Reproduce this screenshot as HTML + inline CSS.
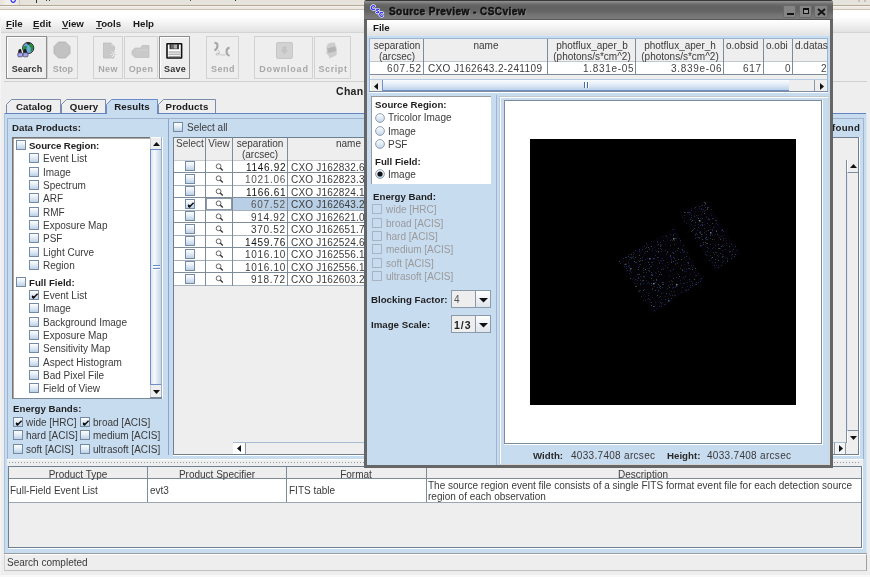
<!DOCTYPE html>
<html><head><meta charset="utf-8"><style>
html,body{margin:0;padding:0;width:870px;height:577px;overflow:hidden;background:#f2f2f2;}
body{position:relative;font-family:"Liberation Sans",sans-serif;}
div,span,svg{position:absolute;}
.t{white-space:nowrap;line-height:1;will-change:transform;}
</style></head><body>
<div style="left:0px;top:0px;width:870px;height:10px;background:#e6e2dc"></div>
<div style="left:0px;top:5px;width:870px;height:1px;background:#b4a894"></div>
<div style="left:0px;top:6px;width:870px;height:1px;background:#f4f2ee"></div>
<div style="left:0px;top:7px;width:870px;height:2px;background:#ebe8e2"></div>
<div style="left:0px;top:9px;width:870px;height:1px;background:#cdc2b0"></div>
<div style="left:0px;top:0px;width:19px;height:5px;background:linear-gradient(90deg,#e8e4dc,#f2f0ea 40%,#ebe7df)"></div>
<div style="left:19px;top:0px;width:1px;height:5px;background:#cfc8bb"></div>
<svg style="left:10px;top:-3px" width="7" height="7"><ellipse cx="3.2" cy="2.8" rx="2.2" ry="2.6" fill="none" stroke="#3030f0" stroke-width="1.2"/></svg>
<div style="left:36px;top:0px;width:1px;height:3px;background:#333"></div>
<div style="left:46px;top:0px;width:1px;height:1px;background:#444"></div>
<div style="left:49px;top:0px;width:1px;height:1px;background:#444"></div>
<div style="left:189.5px;top:0px;width:1.2px;height:1px;background:#555"></div>
<div style="left:234.5px;top:0px;width:1.5px;height:1px;background:#333"></div>
<div style="left:858px;top:0px;width:2px;height:2px;background:#bdb8b0;border-radius:1px"></div>
<div style="left:864px;top:0px;width:2px;height:2px;background:#bdb8b0;border-radius:1px"></div>
<div style="left:0px;top:10px;width:870px;height:565px;background:#eeeeee"></div>
<div style="left:0px;top:575px;width:870px;height:2px;background:#f8f8f8"></div>
<div style="left:0px;top:10px;width:870px;height:22px;background:linear-gradient(#ffffff 0%,#ffffff 30%,#e2e2e2 100%)"></div>
<div style="left:0px;top:17px;width:1px;height:557px;background:#f4f4f4"></div>
<div style="left:1px;top:32px;width:869px;height:1px;background:#d4d4d4"></div>
<span class="t" style="left:6.4px;top:19px;font-size:9.7px;font-weight:bold;color:#1a1a1a;">File</span>
<span class="t" style="left:33.3px;top:19px;font-size:9.7px;font-weight:bold;color:#1a1a1a;">Edit</span>
<span class="t" style="left:62px;top:19px;font-size:9.7px;font-weight:bold;color:#1a1a1a;">View</span>
<span class="t" style="left:96.2px;top:19px;font-size:9.7px;font-weight:bold;color:#1a1a1a;">Tools</span>
<span class="t" style="left:132.6px;top:19px;font-size:9.7px;font-weight:bold;color:#1a1a1a;">Help</span>
<div style="left:6.4px;top:28px;width:6px;height:1px;background:#333"></div>
<div style="left:33.3px;top:28px;width:6px;height:1px;background:#333"></div>
<div style="left:62px;top:28px;width:6px;height:1px;background:#333"></div>
<div style="left:96.2px;top:28px;width:6px;height:1px;background:#333"></div>
<div style="left:6px;top:36px;width:41px;height:43px;box-sizing:border-box;border:1px solid #8e8e8e;box-shadow:inset 1px 1px 0 #ffffff;"></div>
<span class="t" style="left:-173.5px;width:400px;text-align:center;top:65px;font-size:9px;font-weight:bold;color:#333;letter-spacing:0.1px">Search</span>
<svg style="left:16px;top:40px" width="20" height="19" viewBox="0 0 20 19">
<circle cx="12.2" cy="8" r="5.6" fill="#6fa8dc" stroke="#1a1a1a" stroke-width="0.9"/>
<path d="M12 3 Q16.5 3.5 17.5 7 Q17 10 15 12.5 Q14 10 15 8 Q13 6 12 3Z" fill="#1f8f35"/>
<path d="M7 9 Q8 5 11 6 Q11 9 9 12 Q7.5 11 7 9Z" fill="#1f8f35"/>
<path d="M10 2.6 Q12.5 2.2 15 3.5 Q13 4 12 5Z" fill="#2a2a2a"/>
<path d="M2.5 10 Q3.5 8.5 5 9 L6 13 H2Z" fill="#1e1e1e"/>
<path d="M7.5 10 Q8.5 8.5 10 9 L11.5 13 H7Z" fill="#1e1e1e"/>
<rect x="1.8" y="12.8" width="4.8" height="4" rx="1" fill="#a4a4ec" stroke="#3a3a5a" stroke-width="0.7"/>
<rect x="7.2" y="12.8" width="4.8" height="4" rx="1" fill="#a4a4ec" stroke="#3a3a5a" stroke-width="0.7"/>
</svg>
<div style="left:47px;top:36px;width:31px;height:43px;box-sizing:border-box;border:1px solid #d2d2d2;"></div>
<span class="t" style="left:-137.5px;width:400px;text-align:center;top:65px;font-size:9px;font-weight:bold;color:#a8a8a8;letter-spacing:0.1px">Stop</span>
<svg style="left:53px;top:41px" width="18" height="18" viewBox="0 0 18 18">
<polygon points="5.5,1 12.5,1 17,5.5 17,12.5 12.5,17 5.5,17 1,12.5 1,5.5" fill="#c2c2c2" stroke="#b0b0b0" stroke-width="0.8"/></svg>
<div style="left:93px;top:36px;width:30px;height:43px;box-sizing:border-box;border:1px solid #d2d2d2;"></div>
<span class="t" style="left:-92.0px;width:400px;text-align:center;top:65px;font-size:9px;font-weight:bold;color:#a8a8a8;letter-spacing:0.3px">New</span>
<svg style="left:102px;top:42px" width="18" height="18" viewBox="0 0 18 18">
<path d="M1.5 1 H9 L12.5 4.5 V16 H1.5Z" fill="#c9c9c9" stroke="#bcbcbc" stroke-width="0.8"/>
<path d="M9 1 V4.5 H12.5" fill="#dedede" stroke="#bcbcbc" stroke-width="0.6"/>
<g stroke="#f4f4f4" stroke-width="0.9"><line x1="12.5" y1="8.5" x2="12.5" y2="16.5"/><line x1="8.5" y1="12.5" x2="16.5" y2="12.5"/><line x1="9.7" y1="9.7" x2="15.3" y2="15.3"/><line x1="15.3" y1="9.7" x2="9.7" y2="15.3"/></g>
<g stroke="#c4c4c4" stroke-width="0.5"><line x1="12.5" y1="9.5" x2="12.5" y2="15.5"/><line x1="9.5" y1="12.5" x2="15.5" y2="12.5"/></g>
</svg>
<div style="left:124px;top:36px;width:34px;height:43px;box-sizing:border-box;border:1px solid #d2d2d2;"></div>
<span class="t" style="left:-59.0px;width:400px;text-align:center;top:65px;font-size:9px;font-weight:bold;color:#a8a8a8;letter-spacing:0.4px">Open</span>
<svg style="left:131px;top:44px" width="20" height="15" viewBox="0 0 20 15">
<path d="M1 7 L4 4 H10 L11 1.5 H18 V13.5 H4 L1 10.5Z" fill="#c9c9c9" stroke="#bdbdbd" stroke-width="0.7"/>
<path d="M5 6 H17" stroke="#d6d6d6" stroke-width="0.8"/></svg>
<div style="left:159px;top:36px;width:31px;height:43px;box-sizing:border-box;border:1px solid #8e8e8e;box-shadow:inset 1px 1px 0 #ffffff;"></div>
<span class="t" style="left:-25.5px;width:400px;text-align:center;top:65px;font-size:9px;font-weight:bold;color:#333;letter-spacing:0.3px">Save</span>
<svg style="left:166px;top:43px" width="17" height="16" viewBox="0 0 17 16">
<rect x="1" y="0.8" width="14.6" height="14.2" rx="0.3" fill="#ffffff" stroke="#111" stroke-width="1.6"/>
<rect x="3.5" y="1" width="9.5" height="5.2" fill="#3a3a3a"/><rect x="7.5" y="1.6" width="3.5" height="4" fill="#b0b0b0"/><rect x="5" y="1.6" width="2.5" height="4" fill="#6a6a6a"/>
<g stroke="#777" stroke-width="0.8"><line x1="2.5" y1="9" x2="14.2" y2="9"/><line x1="2.5" y1="11.2" x2="14.2" y2="11.2"/><line x1="2.5" y1="13.4" x2="14.2" y2="13.4"/></g>
</svg>
<div style="left:206px;top:36px;width:33px;height:43px;box-sizing:border-box;border:1px solid #d2d2d2;"></div>
<span class="t" style="left:22.5px;width:400px;text-align:center;top:65px;font-size:9px;font-weight:bold;color:#a8a8a8;letter-spacing:0.5px">Send</span>
<svg style="left:210px;top:40px" width="26" height="20" viewBox="0 0 26 20">
<path d="M4.5 2.8 Q7.5 2.8 7.5 5.5 Q7.5 9 4.5 10.5" fill="none" stroke="#a6a6a6" stroke-width="2"/>
<path d="M8 10 Q10 11.5 9 14 Q7.5 16.5 6 14.5 Q6 12.5 9 13.5 Q10.5 15.5 12.5 15 L15.5 14.8" fill="none" stroke="#bdbdbd" stroke-width="0.9"/>
<path d="M19.5 7.5 Q16.5 8.5 16.5 11.5 Q16.5 14.5 19.5 15.8" fill="none" stroke="#a6a6a6" stroke-width="2"/>
</svg>
<div style="left:254px;top:36px;width:59px;height:43px;box-sizing:border-box;border:1px solid #d2d2d2;"></div>
<span class="t" style="left:83.5px;width:400px;text-align:center;top:65px;font-size:9px;font-weight:bold;color:#a8a8a8;letter-spacing:0.8px">Download</span>
<svg style="left:276px;top:42px" width="17" height="17" viewBox="0 0 17 17">
<rect x="0.5" y="0.5" width="16" height="16" rx="1.5" fill="#d2d2d2" stroke="#c6c6c6"/>
<path d="M6 4 H11 V8 H13.5 L8.5 12.8 L3.5 8 H6Z" fill="#c4c4c4" stroke="#d8d8d8" stroke-width="0.6"/></svg>
<div style="left:314px;top:36px;width:37px;height:43px;box-sizing:border-box;border:1px solid #d2d2d2;"></div>
<span class="t" style="left:132.5px;width:400px;text-align:center;top:65px;font-size:9px;font-weight:bold;color:#a8a8a8;letter-spacing:0.6px">Script</span>
<svg style="left:324px;top:41px" width="15" height="19" viewBox="0 0 15 19">
<path d="M3 5 Q3 1.5 9 1.5 Q12.5 1.5 11 3.5 Q13.5 7 12.5 10 Q14 14 10 15.5 L5 17.5 Q6 16 4 14 Q1 12 3 9 Q1.5 7 3 5Z" fill="#cdcdcd"/>
<path d="M3 7.5 L11 5.5 L12.5 10 L4.5 12Z" fill="#b3b3b3"/></svg>
<div style="left:4px;top:81px;width:863px;height:1px;background:#cfcfcf"></div>
<span class="t" style="left:336px;top:86px;font-size:10.5px;font-weight:bold;color:#222;letter-spacing:0.3px">Chandra Source Catalog</span>
<svg style="left:6px;top:99px" width="56" height="15" viewBox="0 0 56 15"><path d="M0.5 15 V5.5 L5.5 0.5 H54.5 V15" fill="#eeeeee" stroke="#7b8bab" stroke-width="1"/></svg>
<span class="t" style="left:-166.5px;width:400px;text-align:center;top:102px;font-size:9.7px;font-weight:bold;color:#1a1a1a;letter-spacing:0.1px">Catalog</span>
<svg style="left:61px;top:99px" width="46" height="15" viewBox="0 0 46 15"><path d="M0.5 15 V5.5 L5.5 0.5 H44.5 V15" fill="#eeeeee" stroke="#7b8bab" stroke-width="1"/></svg>
<span class="t" style="left:-116.5px;width:400px;text-align:center;top:102px;font-size:9.7px;font-weight:bold;color:#1a1a1a;letter-spacing:0.1px">Query</span>
<svg style="left:158px;top:99px" width="59" height="15" viewBox="0 0 59 15"><path d="M0.5 15 V5.5 L5.5 0.5 H57.5 V15" fill="#eeeeee" stroke="#7b8bab" stroke-width="1"/></svg>
<span class="t" style="left:-13.0px;width:400px;text-align:center;top:102px;font-size:9.7px;font-weight:bold;color:#1a1a1a;letter-spacing:0.1px">Products</span>
<div style="left:4px;top:113px;width:863px;height:440px;background:#c8dcf0"></div>
<div style="left:4px;top:113px;width:863px;height:1px;background:#6382bf"></div>
<div style="left:4px;top:113px;width:1px;height:440px;background:#a9c2e2"></div>
<div style="left:866px;top:113px;width:1px;height:440px;background:#d8e6f4"></div>
<svg style="left:106px;top:99px" width="53" height="15" viewBox="0 0 53 15"><path d="M0.5 15 V5.5 L5.5 0.5 H51.5 V15" fill="#c8dcf0" stroke="#6a8ac8" stroke-width="1"/></svg>
<span class="t" style="left:-68.0px;width:400px;text-align:center;top:102px;font-size:9.7px;font-weight:bold;color:#1a1a1a;letter-spacing:0.1px">Results</span>
<div style="left:7px;top:118px;width:857px;height:341px;box-sizing:border-box;border:1px solid #9fb3cc;border-bottom:none"></div>
<span class="t" style="left:11.8px;top:123px;font-size:9.7px;font-weight:bold;color:#1f1f1f;">Data Products:</span>
<div style="left:12px;top:137px;width:150px;height:262px;background:#fff;box-sizing:border-box;border-top:2px solid #767676;border-left:2px solid #767676;border-bottom:1px solid #7a8a9a"></div>
<div style="left:13px;top:139px;width:1px;height:259px;background:#a8a8a8"></div>
<div style="left:14px;top:138px;width:136px;height:1px;background:#a8a8a8"></div>
<div style="left:150px;top:137px;width:12px;height:261px;background:#eeeeee;box-sizing:border-box;border-right:1px solid #a0b0c0"></div>
<div style="left:162px;top:137px;width:1px;height:262px;background:#ffffff"></div>
<div style="left:150px;top:137px;width:11px;height:12px;background:#eeeeee;box-sizing:border-box;border-left:1px solid #c8d0d8;border-top:1px solid #ffffff"><svg style="left:2px;top:3.5px" width="7" height="4"><path d="M0 4 L3.5 0 L7 4Z" fill="#111"/></svg></div>
<div style="left:150px;top:149px;width:11px;height:236px;background:linear-gradient(90deg,#dbe6f3,#f6f9fc 35%,#c3d5e9);box-sizing:border-box;border-left:1px solid #6f8fc8;border-top:1px solid #6f8fc8;border-bottom:1px solid #6f8fc8"></div>
<div style="left:153px;top:265px;width:7px;height:1px;background:#6a88c4"></div>
<div style="left:153px;top:266px;width:7px;height:1px;background:#ffffff"></div>
<div style="left:153px;top:268px;width:7px;height:1px;background:#6a88c4"></div>
<div style="left:153px;top:269px;width:7px;height:1px;background:#ffffff"></div>
<div style="left:150px;top:385px;width:11px;height:13px;background:#eeeeee;box-sizing:border-box;border-left:1px solid #c8d0d8"><svg style="left:2px;top:5px" width="7" height="4"><path d="M0 0 L7 0 L3.5 4Z" fill="#111"/></svg></div>
<div style="left:150px;top:397px;width:12px;height:1px;background:#7a8a9a"></div>
<div style="left:16px;top:140px;width:10px;height:10px;box-sizing:border-box;border:1px solid #7489a3;background:linear-gradient(#fdfeff 0%,#e4edf6 45%,#bcd1e6 100%)"></div>
<span class="t" style="left:29.3px;top:141px;font-size:9.7px;font-weight:bold;color:#1f1f1f;letter-spacing:-0.1px">Source Region:</span>
<div style="left:29px;top:153px;width:10px;height:10px;box-sizing:border-box;border:1px solid #7489a3;background:linear-gradient(#fdfeff 0%,#e4edf6 45%,#bcd1e6 100%)"></div>
<span class="t" style="left:42.7px;top:154px;font-size:10px;font-weight:normal;color:#3a3a3a;">Event List</span>
<div style="left:29px;top:167px;width:10px;height:10px;box-sizing:border-box;border:1px solid #7489a3;background:linear-gradient(#fdfeff 0%,#e4edf6 45%,#bcd1e6 100%)"></div>
<span class="t" style="left:42.7px;top:168px;font-size:10px;font-weight:normal;color:#3a3a3a;">Image</span>
<div style="left:29px;top:180px;width:10px;height:10px;box-sizing:border-box;border:1px solid #7489a3;background:linear-gradient(#fdfeff 0%,#e4edf6 45%,#bcd1e6 100%)"></div>
<span class="t" style="left:42.7px;top:181px;font-size:10px;font-weight:normal;color:#3a3a3a;">Spectrum</span>
<div style="left:29px;top:193px;width:10px;height:10px;box-sizing:border-box;border:1px solid #7489a3;background:linear-gradient(#fdfeff 0%,#e4edf6 45%,#bcd1e6 100%)"></div>
<span class="t" style="left:42.7px;top:194px;font-size:10px;font-weight:normal;color:#3a3a3a;">ARF</span>
<div style="left:29px;top:207px;width:10px;height:10px;box-sizing:border-box;border:1px solid #7489a3;background:linear-gradient(#fdfeff 0%,#e4edf6 45%,#bcd1e6 100%)"></div>
<span class="t" style="left:42.7px;top:208px;font-size:10px;font-weight:normal;color:#3a3a3a;">RMF</span>
<div style="left:29px;top:220px;width:10px;height:10px;box-sizing:border-box;border:1px solid #7489a3;background:linear-gradient(#fdfeff 0%,#e4edf6 45%,#bcd1e6 100%)"></div>
<span class="t" style="left:42.7px;top:221px;font-size:10px;font-weight:normal;color:#3a3a3a;">Exposure Map</span>
<div style="left:29px;top:233px;width:10px;height:10px;box-sizing:border-box;border:1px solid #7489a3;background:linear-gradient(#fdfeff 0%,#e4edf6 45%,#bcd1e6 100%)"></div>
<span class="t" style="left:42.7px;top:234px;font-size:10px;font-weight:normal;color:#3a3a3a;">PSF</span>
<div style="left:29px;top:247px;width:10px;height:10px;box-sizing:border-box;border:1px solid #7489a3;background:linear-gradient(#fdfeff 0%,#e4edf6 45%,#bcd1e6 100%)"></div>
<span class="t" style="left:42.7px;top:248px;font-size:10px;font-weight:normal;color:#3a3a3a;">Light Curve</span>
<div style="left:29px;top:260px;width:10px;height:10px;box-sizing:border-box;border:1px solid #7489a3;background:linear-gradient(#fdfeff 0%,#e4edf6 45%,#bcd1e6 100%)"></div>
<span class="t" style="left:42.7px;top:261px;font-size:10px;font-weight:normal;color:#3a3a3a;">Region</span>
<div style="left:16px;top:277px;width:10px;height:10px;box-sizing:border-box;border:1px solid #7489a3;background:linear-gradient(#fdfeff 0%,#e4edf6 45%,#bcd1e6 100%)"></div>
<span class="t" style="left:29.3px;top:278px;font-size:9.7px;font-weight:bold;color:#1f1f1f;">Full Field:</span>
<div style="left:29px;top:290px;width:10px;height:10px;box-sizing:border-box;border:1px solid #7489a3;background:linear-gradient(#fdfeff 0%,#e4edf6 45%,#bcd1e6 100%)"><svg style="left:1px;top:1px" width="8" height="8" viewBox="0 0 8 8"><path d="M1.2 3.8 L2.6 5.8 L6.6 1.8" fill="none" stroke="#111" stroke-width="1.5"/><rect x="1" y="4" width="2.2" height="2.2" fill="#111"/></svg></div>
<span class="t" style="left:42.7px;top:291px;font-size:10px;font-weight:normal;color:#3a3a3a;">Event List</span>
<div style="left:29px;top:303px;width:10px;height:10px;box-sizing:border-box;border:1px solid #7489a3;background:linear-gradient(#fdfeff 0%,#e4edf6 45%,#bcd1e6 100%)"></div>
<span class="t" style="left:42.7px;top:304px;font-size:10px;font-weight:normal;color:#3a3a3a;">Image</span>
<div style="left:29px;top:317px;width:10px;height:10px;box-sizing:border-box;border:1px solid #7489a3;background:linear-gradient(#fdfeff 0%,#e4edf6 45%,#bcd1e6 100%)"></div>
<span class="t" style="left:42.7px;top:318px;font-size:10px;font-weight:normal;color:#3a3a3a;">Background Image</span>
<div style="left:29px;top:330px;width:10px;height:10px;box-sizing:border-box;border:1px solid #7489a3;background:linear-gradient(#fdfeff 0%,#e4edf6 45%,#bcd1e6 100%)"></div>
<span class="t" style="left:42.7px;top:331px;font-size:10px;font-weight:normal;color:#3a3a3a;">Exposure Map</span>
<div style="left:29px;top:343px;width:10px;height:10px;box-sizing:border-box;border:1px solid #7489a3;background:linear-gradient(#fdfeff 0%,#e4edf6 45%,#bcd1e6 100%)"></div>
<span class="t" style="left:42.7px;top:344px;font-size:10px;font-weight:normal;color:#3a3a3a;">Sensitivity Map</span>
<div style="left:29px;top:357px;width:10px;height:10px;box-sizing:border-box;border:1px solid #7489a3;background:linear-gradient(#fdfeff 0%,#e4edf6 45%,#bcd1e6 100%)"></div>
<span class="t" style="left:42.7px;top:358px;font-size:10px;font-weight:normal;color:#3a3a3a;">Aspect Histogram</span>
<div style="left:29px;top:370px;width:10px;height:10px;box-sizing:border-box;border:1px solid #7489a3;background:linear-gradient(#fdfeff 0%,#e4edf6 45%,#bcd1e6 100%)"></div>
<span class="t" style="left:42.7px;top:371px;font-size:10px;font-weight:normal;color:#3a3a3a;">Bad Pixel File</span>
<div style="left:29px;top:383px;width:10px;height:10px;box-sizing:border-box;border:1px solid #7489a3;background:linear-gradient(#fdfeff 0%,#e4edf6 45%,#bcd1e6 100%)"></div>
<span class="t" style="left:42.7px;top:384px;font-size:10px;font-weight:normal;color:#3a3a3a;">Field of View</span>
<span class="t" style="left:12.8px;top:404px;font-size:9.7px;font-weight:bold;color:#1f1f1f;">Energy Bands:</span>
<div style="left:13px;top:417px;width:10px;height:10px;box-sizing:border-box;border:1px solid #7489a3;background:linear-gradient(#fdfeff 0%,#e4edf6 45%,#bcd1e6 100%)"><svg style="left:1px;top:1px" width="8" height="8" viewBox="0 0 8 8"><path d="M1.2 3.8 L2.6 5.8 L6.6 1.8" fill="none" stroke="#111" stroke-width="1.5"/><rect x="1" y="4" width="2.2" height="2.2" fill="#111"/></svg></div>
<span class="t" style="left:26px;top:418px;font-size:10px;font-weight:normal;color:#3a3a3a;">wide [HRC]</span>
<div style="left:80px;top:417px;width:10px;height:10px;box-sizing:border-box;border:1px solid #7489a3;background:linear-gradient(#fdfeff 0%,#e4edf6 45%,#bcd1e6 100%)"><svg style="left:1px;top:1px" width="8" height="8" viewBox="0 0 8 8"><path d="M1.2 3.8 L2.6 5.8 L6.6 1.8" fill="none" stroke="#111" stroke-width="1.5"/><rect x="1" y="4" width="2.2" height="2.2" fill="#111"/></svg></div>
<span class="t" style="left:92.8px;top:418px;font-size:10px;font-weight:normal;color:#3a3a3a;">broad [ACIS]</span>
<div style="left:13px;top:430px;width:10px;height:10px;box-sizing:border-box;border:1px solid #7489a3;background:linear-gradient(#fdfeff 0%,#e4edf6 45%,#bcd1e6 100%)"></div>
<span class="t" style="left:26px;top:431px;font-size:10px;font-weight:normal;color:#3a3a3a;">hard [ACIS]</span>
<div style="left:80px;top:430px;width:10px;height:10px;box-sizing:border-box;border:1px solid #7489a3;background:linear-gradient(#fdfeff 0%,#e4edf6 45%,#bcd1e6 100%)"></div>
<span class="t" style="left:92.8px;top:431px;font-size:10px;font-weight:normal;color:#3a3a3a;">medium [ACIS]</span>
<div style="left:13px;top:444px;width:10px;height:10px;box-sizing:border-box;border:1px solid #7489a3;background:linear-gradient(#fdfeff 0%,#e4edf6 45%,#bcd1e6 100%)"></div>
<span class="t" style="left:26px;top:445px;font-size:10px;font-weight:normal;color:#3a3a3a;">soft [ACIS]</span>
<div style="left:80px;top:444px;width:10px;height:10px;box-sizing:border-box;border:1px solid #7489a3;background:linear-gradient(#fdfeff 0%,#e4edf6 45%,#bcd1e6 100%)"></div>
<span class="t" style="left:92.8px;top:445px;font-size:10px;font-weight:normal;color:#3a3a3a;">ultrasoft [ACIS]</span>
<div style="left:168px;top:119px;width:1px;height:336px;background:#8aa4cc"></div>
<div style="left:173px;top:122px;width:10px;height:10px;box-sizing:border-box;border:1px solid #7489a3;background:linear-gradient(#fdfeff 0%,#e4edf6 45%,#bcd1e6 100%)"></div>
<span class="t" style="left:186.5px;top:123px;font-size:10px;font-weight:normal;color:#3a3a3a;">Select all</span>
<span class="t" style="right:10px;top:123px;font-size:9.7px;font-weight:bold;color:#1f1f1f;letter-spacing:0.25px">found</span>
<div style="left:173px;top:137px;width:686px;height:318px;background:#eeeeee;box-sizing:border-box;border:1px solid #6e7f92;border-bottom:1px solid #6e7f92"></div>
<div style="left:173px;top:455px;width:686px;height:1px;background:#ffffff"></div>
<div style="left:174px;top:138px;width:684px;height:23px;background:#eeeeee"></div>
<div style="left:174px;top:160px;width:657px;height:1px;background:#c8ccd0"></div>
<div style="left:205px;top:138px;width:1px;height:148px;background:#7e8c9a"></div>
<div style="left:232px;top:138px;width:1px;height:148px;background:#7e8c9a"></div>
<div style="left:287px;top:138px;width:1px;height:148px;background:#7e8c9a"></div>
<div style="left:500px;top:138px;width:1px;height:148px;background:#7e8c9a"></div>
<span class="t" style="left:-10.5px;width:400px;text-align:center;top:139px;font-size:10px;font-weight:normal;color:#444;">Select</span>
<span class="t" style="left:19px;width:400px;text-align:center;top:139px;font-size:10px;font-weight:normal;color:#444;">View</span>
<span class="t" style="left:60px;width:400px;text-align:center;top:139px;font-size:10px;font-weight:normal;color:#3a3a3a;">separation</span>
<span class="t" style="left:60px;width:400px;text-align:center;top:150px;font-size:10px;font-weight:normal;color:#3a3a3a;">(arcsec)</span>
<span class="t" style="right:509px;top:139px;font-size:10px;font-weight:normal;color:#3a3a3a;">name</span>
<div style="left:174px;top:161px;width:657px;height:11px;background:#fff"></div>
<div style="left:185px;top:161px;width:10px;height:10px;box-sizing:border-box;border:1px solid #7489a3;background:linear-gradient(#fdfeff 0%,#e4edf6 45%,#bcd1e6 100%)"></div>
<svg style="left:215px;top:163px" width="9" height="9" viewBox="0 0 9 9"><circle cx="3.6" cy="3.3" r="2.4" fill="none" stroke="#555" stroke-width="0.9"/><line x1="5.3" y1="5" x2="7.8" y2="7.5" stroke="#333" stroke-width="1.3"/></svg>
<span class="t" style="right:584px;top:163px;font-size:10px;font-weight:normal;color:#111;letter-spacing:0.68px">1146.92</span>
<span class="t" style="left:290.5px;top:163px;font-size:10px;font-weight:normal;color:#3a3a3a;letter-spacing:0.2px">CXO J162832.6</span>
<div style="left:174px;top:172px;width:657px;height:1px;background:#7e8c9a"></div>
<div style="left:174px;top:173px;width:657px;height:12px;background:#fff"></div>
<div style="left:185px;top:174px;width:10px;height:10px;box-sizing:border-box;border:1px solid #7489a3;background:linear-gradient(#fdfeff 0%,#e4edf6 45%,#bcd1e6 100%)"></div>
<svg style="left:215px;top:175px" width="9" height="9" viewBox="0 0 9 9"><circle cx="3.6" cy="3.3" r="2.4" fill="none" stroke="#555" stroke-width="0.9"/><line x1="5.3" y1="5" x2="7.8" y2="7.5" stroke="#333" stroke-width="1.3"/></svg>
<span class="t" style="right:584px;top:175px;font-size:10px;font-weight:normal;color:#555;letter-spacing:0.68px">1021.06</span>
<span class="t" style="left:290.5px;top:175px;font-size:10px;font-weight:normal;color:#3a3a3a;letter-spacing:0.2px">CXO J162823.3</span>
<div style="left:174px;top:185px;width:657px;height:1px;background:#a4b0bc"></div>
<div style="left:174px;top:186px;width:657px;height:11px;background:#fff"></div>
<div style="left:185px;top:186px;width:10px;height:10px;box-sizing:border-box;border:1px solid #7489a3;background:linear-gradient(#fdfeff 0%,#e4edf6 45%,#bcd1e6 100%)"></div>
<svg style="left:215px;top:188px" width="9" height="9" viewBox="0 0 9 9"><circle cx="3.6" cy="3.3" r="2.4" fill="none" stroke="#555" stroke-width="0.9"/><line x1="5.3" y1="5" x2="7.8" y2="7.5" stroke="#333" stroke-width="1.3"/></svg>
<span class="t" style="right:584px;top:188px;font-size:10px;font-weight:normal;color:#111;letter-spacing:0.68px">1166.61</span>
<span class="t" style="left:290.5px;top:188px;font-size:10px;font-weight:normal;color:#3a3a3a;letter-spacing:0.2px">CXO J162824.1</span>
<div style="left:174px;top:197px;width:657px;height:1px;background:#7e8c9a"></div>
<div style="left:233px;top:198px;width:598px;height:12px;background:#b8cfe6"></div>
<div style="left:174px;top:198px;width:31px;height:12px;background:#fff"></div>
<div style="left:206px;top:198px;width:26px;height:12px;box-sizing:border-box;border:1px solid #8a98a8;background:#fff"></div>
<div style="left:185px;top:199px;width:10px;height:10px;box-sizing:border-box;border:1px solid #7489a3;background:linear-gradient(#fdfeff 0%,#e4edf6 45%,#bcd1e6 100%)"><svg style="left:1px;top:1px" width="8" height="8" viewBox="0 0 8 8"><path d="M1.2 3.8 L2.6 5.8 L6.6 1.8" fill="none" stroke="#111" stroke-width="1.5"/><rect x="1" y="4" width="2.2" height="2.2" fill="#111"/></svg></div>
<svg style="left:215px;top:200px" width="9" height="9" viewBox="0 0 9 9"><circle cx="3.6" cy="3.3" r="2.4" fill="none" stroke="#555" stroke-width="0.9"/><line x1="5.3" y1="5" x2="7.8" y2="7.5" stroke="#333" stroke-width="1.3"/></svg>
<span class="t" style="right:584px;top:200px;font-size:10px;font-weight:normal;color:#555;letter-spacing:0.68px">607.52</span>
<span class="t" style="left:290.5px;top:200px;font-size:10px;font-weight:normal;color:#3a3a3a;letter-spacing:0.2px">CXO J162643.2</span>
<div style="left:174px;top:210px;width:657px;height:1px;background:#a4b0bc"></div>
<div style="left:174px;top:211px;width:657px;height:11px;background:#fff"></div>
<div style="left:185px;top:211px;width:10px;height:10px;box-sizing:border-box;border:1px solid #7489a3;background:linear-gradient(#fdfeff 0%,#e4edf6 45%,#bcd1e6 100%)"></div>
<svg style="left:215px;top:213px" width="9" height="9" viewBox="0 0 9 9"><circle cx="3.6" cy="3.3" r="2.4" fill="none" stroke="#555" stroke-width="0.9"/><line x1="5.3" y1="5" x2="7.8" y2="7.5" stroke="#333" stroke-width="1.3"/></svg>
<span class="t" style="right:584px;top:213px;font-size:10px;font-weight:normal;color:#3a3a3a;letter-spacing:0.68px">914.92</span>
<span class="t" style="left:290.5px;top:213px;font-size:10px;font-weight:normal;color:#3a3a3a;letter-spacing:0.2px">CXO J162621.0</span>
<div style="left:174px;top:222px;width:657px;height:1px;background:#7e8c9a"></div>
<div style="left:174px;top:223px;width:657px;height:12px;background:#fff"></div>
<div style="left:185px;top:224px;width:10px;height:10px;box-sizing:border-box;border:1px solid #7489a3;background:linear-gradient(#fdfeff 0%,#e4edf6 45%,#bcd1e6 100%)"></div>
<svg style="left:215px;top:225px" width="9" height="9" viewBox="0 0 9 9"><circle cx="3.6" cy="3.3" r="2.4" fill="none" stroke="#555" stroke-width="0.9"/><line x1="5.3" y1="5" x2="7.8" y2="7.5" stroke="#333" stroke-width="1.3"/></svg>
<span class="t" style="right:584px;top:225px;font-size:10px;font-weight:normal;color:#3a3a3a;letter-spacing:0.68px">370.52</span>
<span class="t" style="left:290.5px;top:225px;font-size:10px;font-weight:normal;color:#3a3a3a;letter-spacing:0.2px">CXO J162651.7</span>
<div style="left:174px;top:235px;width:657px;height:1px;background:#a4b0bc"></div>
<div style="left:174px;top:236px;width:657px;height:11px;background:#fff"></div>
<div style="left:185px;top:236px;width:10px;height:10px;box-sizing:border-box;border:1px solid #7489a3;background:linear-gradient(#fdfeff 0%,#e4edf6 45%,#bcd1e6 100%)"></div>
<svg style="left:215px;top:238px" width="9" height="9" viewBox="0 0 9 9"><circle cx="3.6" cy="3.3" r="2.4" fill="none" stroke="#555" stroke-width="0.9"/><line x1="5.3" y1="5" x2="7.8" y2="7.5" stroke="#333" stroke-width="1.3"/></svg>
<span class="t" style="right:584px;top:238px;font-size:10px;font-weight:normal;color:#111;letter-spacing:0.68px">1459.76</span>
<span class="t" style="left:290.5px;top:238px;font-size:10px;font-weight:normal;color:#3a3a3a;letter-spacing:0.2px">CXO J162524.6</span>
<div style="left:174px;top:247px;width:657px;height:1px;background:#7e8c9a"></div>
<div style="left:174px;top:248px;width:657px;height:12px;background:#fff"></div>
<div style="left:185px;top:249px;width:10px;height:10px;box-sizing:border-box;border:1px solid #7489a3;background:linear-gradient(#fdfeff 0%,#e4edf6 45%,#bcd1e6 100%)"></div>
<svg style="left:215px;top:250px" width="9" height="9" viewBox="0 0 9 9"><circle cx="3.6" cy="3.3" r="2.4" fill="none" stroke="#555" stroke-width="0.9"/><line x1="5.3" y1="5" x2="7.8" y2="7.5" stroke="#333" stroke-width="1.3"/></svg>
<span class="t" style="right:584px;top:250px;font-size:10px;font-weight:normal;color:#3a3a3a;letter-spacing:0.68px">1016.10</span>
<span class="t" style="left:290.5px;top:250px;font-size:10px;font-weight:normal;color:#3a3a3a;letter-spacing:0.2px">CXO J162556.1</span>
<div style="left:174px;top:260px;width:657px;height:1px;background:#a4b0bc"></div>
<div style="left:174px;top:261px;width:657px;height:11px;background:#fff"></div>
<div style="left:185px;top:261px;width:10px;height:10px;box-sizing:border-box;border:1px solid #7489a3;background:linear-gradient(#fdfeff 0%,#e4edf6 45%,#bcd1e6 100%)"></div>
<svg style="left:215px;top:263px" width="9" height="9" viewBox="0 0 9 9"><circle cx="3.6" cy="3.3" r="2.4" fill="none" stroke="#555" stroke-width="0.9"/><line x1="5.3" y1="5" x2="7.8" y2="7.5" stroke="#333" stroke-width="1.3"/></svg>
<span class="t" style="right:584px;top:263px;font-size:10px;font-weight:normal;color:#3a3a3a;letter-spacing:0.68px">1016.10</span>
<span class="t" style="left:290.5px;top:263px;font-size:10px;font-weight:normal;color:#3a3a3a;letter-spacing:0.2px">CXO J162556.1</span>
<div style="left:174px;top:272px;width:657px;height:1px;background:#7e8c9a"></div>
<div style="left:174px;top:273px;width:657px;height:12px;background:#fff"></div>
<div style="left:185px;top:274px;width:10px;height:10px;box-sizing:border-box;border:1px solid #7489a3;background:linear-gradient(#fdfeff 0%,#e4edf6 45%,#bcd1e6 100%)"></div>
<svg style="left:215px;top:275px" width="9" height="9" viewBox="0 0 9 9"><circle cx="3.6" cy="3.3" r="2.4" fill="none" stroke="#555" stroke-width="0.9"/><line x1="5.3" y1="5" x2="7.8" y2="7.5" stroke="#333" stroke-width="1.3"/></svg>
<span class="t" style="right:584px;top:275px;font-size:10px;font-weight:normal;color:#3a3a3a;letter-spacing:0.68px">918.72</span>
<span class="t" style="left:290.5px;top:275px;font-size:10px;font-weight:normal;color:#3a3a3a;letter-spacing:0.2px">CXO J162603.2</span>
<div style="left:174px;top:285px;width:657px;height:1px;background:#a4b0bc"></div>
<div style="left:205px;top:138px;width:1px;height:148px;background:#7e8c9a"></div>
<div style="left:232px;top:138px;width:1px;height:148px;background:#7e8c9a"></div>
<div style="left:287px;top:138px;width:1px;height:148px;background:#7e8c9a"></div>
<div style="left:500px;top:138px;width:1px;height:148px;background:#7e8c9a"></div>
<div style="left:846px;top:160px;width:12px;height:283px;background:#eeeeee;box-sizing:border-box;border-left:1px solid #7e8e9e"></div>
<div style="left:847px;top:172px;width:1px;height:258px;background:#dde8f4"></div>
<div style="left:847px;top:160px;width:11px;height:13px;background:#eeeeee;box-sizing:border-box;border-left:1px solid #ffffff;border-bottom:1px solid #7e8e9e"><svg style="left:1.5px;top:4px" width="7" height="4"><path d="M0 4 L3.5 0 L7 4Z" fill="#111"/></svg></div>
<div style="left:847px;top:430px;width:11px;height:13px;background:#eeeeee;box-sizing:border-box;border-left:1px solid #ffffff;border-top:1px solid #7e8e9e"><svg style="left:1.5px;top:5px" width="7" height="4"><path d="M0 0 L7 0 L3.5 4Z" fill="#111"/></svg></div>
<div style="left:859px;top:137px;width:1px;height:319px;background:#ffffff"></div>
<div style="left:233px;top:442px;width:613px;height:13px;background:#eeeeee;box-sizing:border-box;border-top:1px solid #a8bcd4"></div>
<div style="left:233px;top:443px;width:13px;height:11px;background:#fff;box-sizing:border-box;border-right:1px solid #8a9aaa"><svg style="left:4px;top:2px" width="4" height="7"><path d="M4 0 L0 3.5 L4 7Z" fill="#111"/></svg></div>
<div style="left:834px;top:443px;width:12px;height:11px;background:#f4f4f4;box-sizing:border-box;border-left:1px solid #8a9aaa;border-right:1px solid #8a9aaa"><svg style="left:4px;top:2px" width="4" height="7"><path d="M0 0 L4 3.5 L0 7Z" fill="#111"/></svg></div>
<div style="left:846px;top:443px;width:12px;height:11px;background:#eeeeee"></div>
<div style="left:173px;top:454px;width:686px;height:1px;background:#6e7f92"></div>
<div style="left:7px;top:459px;width:856px;height:7px;background:#eeeeee;box-sizing:border-box;border-top:1px solid #ffffff"></div>
<div style="left:9px;top:462px;width:852px;height:1px;background:repeating-linear-gradient(90deg,#8a98a8 0 1px,transparent 1px 3px)"></div>
<div style="left:8px;top:466px;width:854px;height:82px;background:#eeeeee;box-sizing:border-box;border:1px solid #6e7f92"></div>
<div style="left:8px;top:548px;width:855px;height:1px;background:#ffffff"></div>
<div style="left:862px;top:466px;width:1px;height:83px;background:#ffffff"></div>
<div style="left:9px;top:467px;width:852px;height:12px;background:#eeeeee"></div>
<div style="left:9px;top:478px;width:852px;height:1px;background:#7e8c9a"></div>
<div style="left:147px;top:467px;width:1px;height:35px;background:#7e8c9a"></div>
<div style="left:286px;top:467px;width:1px;height:35px;background:#7e8c9a"></div>
<div style="left:426px;top:467px;width:1px;height:35px;background:#7e8c9a"></div>
<div style="left:9px;top:479px;width:852px;height:23px;background:#fff"></div>
<div style="left:9px;top:502px;width:852px;height:1px;background:#9aa6b2"></div>
<div style="left:147px;top:467px;width:1px;height:35px;background:#7e8c9a"></div>
<div style="left:286px;top:467px;width:1px;height:35px;background:#7e8c9a"></div>
<div style="left:426px;top:467px;width:1px;height:35px;background:#7e8c9a"></div>
<span class="t" style="left:-122px;width:400px;text-align:center;top:470px;font-size:10px;font-weight:normal;color:#3a3a3a;">Product Type</span>
<span class="t" style="left:16.5px;width:400px;text-align:center;top:470px;font-size:10px;font-weight:normal;color:#3a3a3a;">Product Specifier</span>
<span class="t" style="left:156px;width:400px;text-align:center;top:470px;font-size:10px;font-weight:normal;color:#3a3a3a;">Format</span>
<span class="t" style="left:443px;width:400px;text-align:center;top:470px;font-size:10px;font-weight:normal;color:#3a3a3a;">Description</span>
<span class="t" style="left:10px;top:486px;font-size:10px;font-weight:normal;color:#3a3a3a;">Full-Field Event List</span>
<span class="t" style="left:149.5px;top:486px;font-size:10px;font-weight:normal;color:#3a3a3a;">evt3</span>
<span class="t" style="left:288.5px;top:486px;font-size:10px;font-weight:normal;color:#3a3a3a;">FITS table</span>
<span class="t" style="left:427.5px;top:481px;font-size:10px;font-weight:normal;color:#3a3a3a;">The source region event file consists of a single FITS format event file for each detection source</span>
<span class="t" style="left:427.5px;top:492px;font-size:10px;font-weight:normal;color:#3a3a3a;">region of each observation</span>
<div style="left:4px;top:553px;width:863px;height:1px;background:#9c9c9c"></div>
<div style="left:4px;top:554px;width:863px;height:17px;background:#eeeeee;box-sizing:border-box;border-top:1px solid #ffffff;border-left:1px solid #d0d0d0;border-right:1px solid #a0a0a0;border-bottom:1px solid #c0c0c0"></div>
<span class="t" style="left:7px;top:558px;font-size:10px;font-weight:normal;color:#3a3a3a;">Search completed</span>
<div style="left:364px;top:0px;width:469px;height:468px;background:#666;border-radius:3px 3px 0 0"></div>
<div style="left:364px;top:0px;width:469px;height:20px;border-radius:3px 3px 0 0;background:linear-gradient(#383838 0px,#383838 1px,#8e8e8e 1px,#8a8a8a 2px,#6c6c6c 4px,#616161 7px,#646464 11px,#747474 15px,#7a7a7a 19px,#585858 19px,#585858 20px)"></div>
<svg style="left:369.5px;top:3.5px" width="15" height="14" viewBox="0 0 18 16"><g fill="none" stroke-linecap="round"><g stroke="#ffffff" stroke-width="3"><path d="M5.5 2.3 A2.3 2.3 0 1 0 5.5 5.7"/><path d="M10.5 6.3 Q9 5.3 8 6.3 Q7.6 7.4 9 8 Q10.6 8.6 10.2 9.7 Q9.2 10.7 7.8 9.8"/><path d="M15.5 10.3 A2.3 2.3 0 1 0 15.5 13.7"/></g><g stroke="#2a2aff" stroke-width="1.5"><path d="M5.5 2.3 A2.3 2.3 0 1 0 5.5 5.7"/><path d="M10.5 6.3 Q9 5.3 8 6.3 Q7.6 7.4 9 8 Q10.6 8.6 10.2 9.7 Q9.2 10.7 7.8 9.8"/><path d="M15.5 10.3 A2.3 2.3 0 1 0 15.5 13.7"/></g></g></svg>
<span class="t" style="left:388.8px;top:7px;font-size:10.01px;font-weight:bold;color:#111;text-shadow:1px 1px 0.5px #8c8c8c;-webkit-text-stroke:0.45px #111;letter-spacing:0.45px">Source Preview - CSCview</span>
<div style="left:783px;top:5px;width:13px;height:13px;box-sizing:border-box;background:#848484;border:1px solid #6a6a6a;border-radius:2px"><div style="left:3px;top:7px;width:7px;height:2px;background:#111"></div></div>
<div style="left:799px;top:5px;width:13px;height:13px;box-sizing:border-box;background:#848484;border:1px solid #6a6a6a;border-radius:2px"><div style="left:2.5px;top:2px;width:6px;height:6px;box-sizing:border-box;border:1px solid #111;border-top:2px solid #111;background:#9a9a9a"></div></div>
<div style="left:814px;top:5px;width:14px;height:13px;box-sizing:border-box;background:#848484;border:1px solid #6a6a6a;border-radius:2px"><svg style="left:2px;top:2px" width="9" height="8" viewBox="0 0 9 8"><path d="M1 1 L8 7 M8 1 L1 7" stroke="#111" stroke-width="1.8"/></svg></div>
<div style="left:367px;top:20px;width:463px;height:15px;background:linear-gradient(#ffffff 0%,#f6f6f6 40%,#e2e2e2 100%)"></div>
<span class="t" style="left:373px;top:23px;font-size:9.7px;font-weight:bold;color:#1a1a1a;">File</span>
<div style="left:367px;top:35px;width:463px;height:430px;background:#c8dcf0"></div>
<div style="left:367px;top:35px;width:463px;height:1px;background:#dde6ee"></div>
<div style="left:369px;top:38px;width:459px;height:54px;background:#eeeeee;box-sizing:border-box;border:1px solid #9ab4d4;box-shadow:inset 1px 1px 0 #ffffff"></div>
<div style="left:370px;top:39px;width:457px;height:23px;background:#eeeeee"></div>
<div style="left:370px;top:61px;width:457px;height:1px;background:#c0c8d0"></div>
<div style="left:370px;top:62px;width:457px;height:12px;background:#fff"></div>
<div style="left:370px;top:74px;width:457px;height:1px;background:#7e8c9a"></div>
<div style="left:423px;top:39px;width:1px;height:36px;background:#7e8c9a"></div>
<div style="left:547px;top:39px;width:1px;height:36px;background:#7e8c9a"></div>
<div style="left:635px;top:39px;width:1px;height:36px;background:#7e8c9a"></div>
<div style="left:723px;top:39px;width:1px;height:36px;background:#7e8c9a"></div>
<div style="left:763px;top:39px;width:1px;height:36px;background:#7e8c9a"></div>
<div style="left:792px;top:39px;width:1px;height:36px;background:#7e8c9a"></div>
<span class="t" style="left:196.5px;width:400px;text-align:center;top:41px;font-size:10px;font-weight:normal;color:#3a3a3a;">separation</span>
<span class="t" style="left:196.5px;width:400px;text-align:center;top:52px;font-size:10px;font-weight:normal;color:#3a3a3a;">(arcsec)</span>
<span class="t" style="left:285.5px;width:400px;text-align:center;top:41px;font-size:10px;font-weight:normal;color:#3a3a3a;">name</span>
<span class="t" style="left:391.5px;width:400px;text-align:center;top:41px;font-size:10px;font-weight:normal;color:#3a3a3a;">photflux_aper_b</span>
<span class="t" style="left:391.5px;width:400px;text-align:center;top:52px;font-size:10px;font-weight:normal;color:#3a3a3a;">(photons/s*cm^2)</span>
<span class="t" style="left:479.5px;width:400px;text-align:center;top:41px;font-size:10px;font-weight:normal;color:#3a3a3a;">photflux_aper_h</span>
<span class="t" style="left:479.5px;width:400px;text-align:center;top:52px;font-size:10px;font-weight:normal;color:#3a3a3a;">(photons/s*cm^2)</span>
<span class="t" style="left:726px;top:41px;font-size:10px;font-weight:normal;color:#3a3a3a;">o.obsid</span>
<span class="t" style="left:766px;top:41px;font-size:10px;font-weight:normal;color:#3a3a3a;">o.obi</span>
<span class="t" style="left:795px;top:41px;font-size:10px;font-weight:normal;color:#3a3a3a;clip-path:inset(0 -10px 0 0)">d.datas</span>
<span class="t" style="right:448px;top:64px;font-size:10px;font-weight:normal;color:#444;letter-spacing:0.68px">607.52</span>
<span class="t" style="left:427.5px;top:64px;font-size:10px;font-weight:normal;color:#3a3a3a;letter-spacing:0.36px">CXO J162643.2-241109</span>
<span class="t" style="right:236px;top:64px;font-size:10px;font-weight:normal;color:#444;letter-spacing:0.68px">1.831e-05</span>
<span class="t" style="right:148px;top:64px;font-size:10px;font-weight:normal;color:#444;letter-spacing:0.68px">3.839e-06</span>
<span class="t" style="right:108px;top:64px;font-size:10px;font-weight:normal;color:#444;letter-spacing:0.68px">617</span>
<span class="t" style="right:79px;top:64px;font-size:10px;font-weight:normal;color:#444;">0</span>
<span class="t" style="right:43px;top:64px;font-size:10px;font-weight:normal;color:#444;">2</span>
<div style="left:370px;top:79px;width:457px;height:12px;background:#eeeeee;box-sizing:border-box;border-top:1px solid #b8cce0"></div>
<div style="left:370px;top:80px;width:12px;height:11px;background:#eeeeee;box-sizing:border-box;border-left:1px solid #ffffff"><svg style="left:2.5px;top:2.5px" width="4" height="7"><path d="M4 0 L0 3.5 L4 7Z" fill="#111"/></svg></div>
<div style="left:382px;top:80px;width:407px;height:11px;background:linear-gradient(#fbfdff,#e4edf7 45%,#bcd2ea);box-sizing:border-box;border-left:1px solid #6f8fc8;border-bottom:1px solid #6f8fc8"></div>
<div style="left:584px;top:82px;width:1px;height:6px;background:#4a6aa0"></div>
<div style="left:587px;top:82px;width:1px;height:6px;background:#4a6aa0"></div>
<div style="left:585px;top:82px;width:1px;height:6px;background:#ffffff"></div>
<div style="left:588px;top:82px;width:1px;height:6px;background:#ffffff"></div>
<div style="left:814px;top:80px;width:13px;height:11px;background:#eeeeee;box-sizing:border-box;border-left:1px solid #8a9aaa"><svg style="left:5px;top:2.5px" width="4" height="7"><path d="M0 0 L4 3.5 L0 7Z" fill="#111"/></svg></div>
<div style="left:369px;top:91px;width:459px;height:1px;background:#7e8e9e"></div>
<div style="left:369px;top:92px;width:459px;height:1px;background:#ffffff"></div>
<div style="left:371px;top:96px;width:120px;height:88px;background:#fff;box-sizing:border-box;border-top:1px solid #9a9a9a;border-left:1px solid #9a9a9a"></div>
<span class="t" style="left:375.3px;top:100px;font-size:9.7px;font-weight:bold;color:#1f1f1f;">Source Region:</span>
<div style="left:375px;top:112.5px;width:10px;height:10px;"><svg style="left:0;top:0" width="10" height="10" viewBox="0 0 10 10"><defs><linearGradient id="rg" x1="0" y1="0" x2="0" y2="1"><stop offset="0" stop-color="#fff"/><stop offset="1" stop-color="#c4d6e8"/></linearGradient></defs><circle cx="5" cy="5" r="4.4" fill="url(#rg)" stroke="#8196b0" stroke-width="0.9"/></svg></div>
<span class="t" style="left:388.3px;top:113px;font-size:10px;font-weight:normal;color:#3a3a3a;">Tricolor Image</span>
<div style="left:375px;top:125.8px;width:10px;height:10px;"><svg style="left:0;top:0" width="10" height="10" viewBox="0 0 10 10"><defs><linearGradient id="rg" x1="0" y1="0" x2="0" y2="1"><stop offset="0" stop-color="#fff"/><stop offset="1" stop-color="#c4d6e8"/></linearGradient></defs><circle cx="5" cy="5" r="4.4" fill="url(#rg)" stroke="#8196b0" stroke-width="0.9"/></svg></div>
<span class="t" style="left:388.3px;top:127px;font-size:10px;font-weight:normal;color:#3a3a3a;">Image</span>
<div style="left:375px;top:139.1px;width:10px;height:10px;"><svg style="left:0;top:0" width="10" height="10" viewBox="0 0 10 10"><defs><linearGradient id="rg" x1="0" y1="0" x2="0" y2="1"><stop offset="0" stop-color="#fff"/><stop offset="1" stop-color="#c4d6e8"/></linearGradient></defs><circle cx="5" cy="5" r="4.4" fill="url(#rg)" stroke="#8196b0" stroke-width="0.9"/></svg></div>
<span class="t" style="left:388.3px;top:140px;font-size:10px;font-weight:normal;color:#3a3a3a;">PSF</span>
<span class="t" style="left:375.3px;top:157px;font-size:9.7px;font-weight:bold;color:#1f1f1f;">Full Field:</span>
<div style="left:375px;top:169.4px;width:10px;height:10px;"><svg style="left:0;top:0" width="10" height="10" viewBox="0 0 10 10"><defs><linearGradient id="rg" x1="0" y1="0" x2="0" y2="1"><stop offset="0" stop-color="#fff"/><stop offset="1" stop-color="#c4d6e8"/></linearGradient></defs><circle cx="5" cy="5" r="4.4" fill="url(#rg)" stroke="#8196b0" stroke-width="0.9"/><circle cx="5" cy="5" r="2.6" fill="#111"/></svg></div>
<span class="t" style="left:388.3px;top:170px;font-size:10px;font-weight:normal;color:#3a3a3a;">Image</span>
<span class="t" style="left:372.6px;top:192px;font-size:9.7px;font-weight:bold;color:#1f1f1f;">Energy Band:</span>
<div style="left:372px;top:204px;width:10px;height:10px;box-sizing:border-box;border:1px solid #a8b4c2;background:transparent"></div>
<span class="t" style="left:385.7px;top:205px;font-size:10px;font-weight:normal;color:#9a9a9a;">wide [HRC]</span>
<div style="left:372px;top:218px;width:10px;height:10px;box-sizing:border-box;border:1px solid #a8b4c2;background:transparent"></div>
<span class="t" style="left:385.7px;top:219px;font-size:10px;font-weight:normal;color:#9a9a9a;">broad [ACIS]</span>
<div style="left:372px;top:231px;width:10px;height:10px;box-sizing:border-box;border:1px solid #a8b4c2;background:transparent"></div>
<span class="t" style="left:385.7px;top:232px;font-size:10px;font-weight:normal;color:#9a9a9a;">hard [ACIS]</span>
<div style="left:372px;top:244px;width:10px;height:10px;box-sizing:border-box;border:1px solid #a8b4c2;background:transparent"></div>
<span class="t" style="left:385.7px;top:245px;font-size:10px;font-weight:normal;color:#9a9a9a;">medium [ACIS]</span>
<div style="left:372px;top:258px;width:10px;height:10px;box-sizing:border-box;border:1px solid #a8b4c2;background:transparent"></div>
<span class="t" style="left:385.7px;top:259px;font-size:10px;font-weight:normal;color:#9a9a9a;">soft [ACIS]</span>
<div style="left:372px;top:271px;width:10px;height:10px;box-sizing:border-box;border:1px solid #a8b4c2;background:transparent"></div>
<span class="t" style="left:385.7px;top:272px;font-size:10px;font-weight:normal;color:#9a9a9a;">ultrasoft [ACIS]</span>
<span class="t" style="left:371.2px;top:295px;font-size:9.7px;font-weight:bold;color:#1f1f1f;">Blocking Factor:</span>
<span class="t" style="left:371.2px;top:320px;font-size:9.7px;font-weight:bold;color:#1f1f1f;">Image Scale:</span>
<div style="left:451px;top:290px;width:40px;height:18px;box-sizing:border-box;border:1px solid #8a9aaa;background:#eeeeee"></div>
<div style="left:475px;top:290px;width:16px;height:18px;box-sizing:border-box;border:1px solid #8a9aaa;background:linear-gradient(#ffffff,#dfe5ec)"><svg style="left:3px;top:6.5px" width="9" height="5"><path d="M0 0 L9 0 L4.5 4.5Z" fill="#111"/></svg></div>
<span class="t" style="left:454px;top:295px;font-size:10px;font-weight:normal;color:#555;">4</span>
<div style="left:451px;top:315px;width:40px;height:18px;box-sizing:border-box;border:1px solid #8a9aaa;background:#eeeeee"></div>
<div style="left:475px;top:315px;width:16px;height:18px;box-sizing:border-box;border:1px solid #8a9aaa;background:linear-gradient(#ffffff,#dfe5ec)"><svg style="left:3px;top:6.5px" width="9" height="5"><path d="M0 0 L9 0 L4.5 4.5Z" fill="#111"/></svg></div>
<span class="t" style="left:454px;top:320px;font-size:10.5px;font-weight:bold;color:#222;letter-spacing:1px">1/3</span>
<div style="left:496px;top:95px;width:1px;height:370px;background:#9ab4dc"></div>
<div style="left:499px;top:96px;width:330px;height:369px;box-sizing:border-box;border:1px solid #c0c8d0;border-right-color:#d4d4d4;border-bottom-color:#d4d4d4;box-shadow:inset 1px 1px 0 #ffffff"></div>
<div style="left:504px;top:444px;width:319px;height:1px;background:#ffffff"></div>
<div style="left:822px;top:100px;width:1px;height:345px;background:#ffffff"></div>
<div style="left:504px;top:100px;width:318px;height:344px;background:#fff;box-sizing:border-box;border:1px solid #7e8c9a"></div>
<div style="left:530px;top:139px;width:266px;height:266px;background:#000"></div>
<svg style="left:530px;top:139px" width="266" height="266"><polygon points="88,121 144,89 174,141 123,175" fill="#030308"/><polygon points="151,76 176,60 211,116 185,131" fill="#030308"/><rect x="143" y="95" width="1" height="1" fill="#262660"/><rect x="95" y="124" width="1" height="1" fill="#341c1c"/><rect x="95" y="125" width="1" height="1" fill="#34503c"/><rect x="137" y="123" width="1" height="1" fill="#341c1c"/><rect x="98" y="115" width="1" height="1" fill="#18183e"/><rect x="103" y="139" width="1" height="1" fill="#18183e"/><rect x="149" y="137" width="1" height="1" fill="#34503c"/><rect x="105" y="147" width="1" height="1" fill="#40402c"/><rect x="154" y="129" width="1" height="1" fill="#141438"/><rect x="119" y="110" width="1" height="1" fill="#24341c"/><rect x="148" y="109" width="1" height="1" fill="#34503c"/><rect x="113" y="131" width="1" height="1" fill="#2c2c50"/><rect x="150" y="113" width="1" height="1" fill="#18284e"/><rect x="98" y="124" width="1" height="1" fill="#202040"/><rect x="124" y="171" width="1" height="1" fill="#18284e"/><rect x="153" y="138" width="1" height="1" fill="#2c2c50"/><rect x="117" y="119" width="1" height="1" fill="#141438"/><rect x="137" y="128" width="1" height="1" fill="#18284e"/><rect x="145" y="94" width="1" height="1" fill="#101030"/><rect x="114" y="138" width="1" height="1" fill="#18183e"/><rect x="121" y="146" width="1" height="1" fill="#1c1c48"/><rect x="140" y="131" width="1" height="1" fill="#341c1c"/><rect x="109" y="122" width="1" height="1" fill="#141438"/><rect x="94" y="127" width="1" height="1" fill="#262660"/><rect x="125" y="136" width="1" height="1" fill="#101030"/><rect x="123" y="119" width="1" height="1" fill="#40402c"/><rect x="108" y="130" width="1" height="1" fill="#34503c"/><rect x="103" y="113" width="1" height="1" fill="#24341c"/><rect x="124" y="120" width="1" height="1" fill="#34503c"/><rect x="144" y="152" width="1" height="1" fill="#141438"/><rect x="121" y="123" width="1" height="1" fill="#18284e"/><rect x="129" y="123" width="1" height="1" fill="#341c1c"/><rect x="101" y="118" width="1" height="1" fill="#1c1c48"/><rect x="140" y="95" width="1" height="1" fill="#341c1c"/><rect x="140" y="101" width="1" height="1" fill="#1c3434"/><rect x="170" y="140" width="1" height="1" fill="#141438"/><rect x="96" y="118" width="1" height="1" fill="#1c3434"/><rect x="129" y="148" width="1" height="1" fill="#262660"/><rect x="133" y="101" width="1" height="1" fill="#262660"/><rect x="113" y="144" width="1" height="1" fill="#18284e"/><rect x="147" y="111" width="1" height="1" fill="#2c2c50"/><rect x="107" y="135" width="1" height="1" fill="#262660"/><rect x="116" y="108" width="1" height="1" fill="#202040"/><rect x="122" y="158" width="1" height="1" fill="#341c1c"/><rect x="132" y="119" width="1" height="1" fill="#1c1c48"/><rect x="128" y="105" width="1" height="1" fill="#34503c"/><rect x="160" y="130" width="1" height="1" fill="#18183e"/><rect x="117" y="144" width="1" height="1" fill="#18183e"/><rect x="98" y="122" width="1" height="1" fill="#101030"/><rect x="152" y="130" width="1" height="1" fill="#24341c"/><rect x="125" y="143" width="1" height="1" fill="#18284e"/><rect x="122" y="123" width="1" height="1" fill="#18284e"/><rect x="150" y="103" width="1" height="1" fill="#24341c"/><rect x="128" y="145" width="1" height="1" fill="#34503c"/><rect x="144" y="119" width="1" height="1" fill="#262660"/><rect x="156" y="151" width="1" height="1" fill="#18284e"/><rect x="125" y="163" width="1" height="1" fill="#341c1c"/><rect x="131" y="154" width="1" height="1" fill="#2c2c50"/><rect x="110" y="125" width="1" height="1" fill="#24341c"/><rect x="165" y="145" width="1" height="1" fill="#262660"/><rect x="124" y="167" width="1" height="1" fill="#262660"/><rect x="131" y="164" width="1" height="1" fill="#202040"/><rect x="128" y="151" width="1" height="1" fill="#262660"/><rect x="133" y="130" width="1" height="1" fill="#202040"/><rect x="109" y="112" width="1" height="1" fill="#202040"/><rect x="96" y="127" width="1" height="1" fill="#1c1c48"/><rect x="126" y="141" width="1" height="1" fill="#262660"/><rect x="140" y="106" width="1" height="1" fill="#1c3434"/><rect x="126" y="134" width="1" height="1" fill="#141438"/><rect x="131" y="110" width="1" height="1" fill="#262660"/><rect x="110" y="137" width="1" height="1" fill="#341c1c"/><rect x="98" y="127" width="1" height="1" fill="#18284e"/><rect x="145" y="125" width="1" height="1" fill="#341c1c"/><rect x="145" y="156" width="1" height="1" fill="#202040"/><rect x="144" y="101" width="1" height="1" fill="#24341c"/><rect x="125" y="133" width="1" height="1" fill="#2c2c50"/><rect x="124" y="119" width="1" height="1" fill="#18284e"/><rect x="135" y="126" width="1" height="1" fill="#1c1c48"/><rect x="121" y="133" width="1" height="1" fill="#1c3434"/><rect x="154" y="112" width="1" height="1" fill="#24341c"/><rect x="122" y="135" width="1" height="1" fill="#262660"/><rect x="137" y="149" width="1" height="1" fill="#18284e"/><rect x="111" y="157" width="1" height="1" fill="#24341c"/><rect x="168" y="143" width="1" height="1" fill="#202040"/><rect x="110" y="141" width="1" height="1" fill="#341c1c"/><rect x="127" y="118" width="1" height="1" fill="#262660"/><rect x="123" y="167" width="1" height="1" fill="#34503c"/><rect x="99" y="134" width="1" height="1" fill="#341c1c"/><rect x="168" y="143" width="1" height="1" fill="#262660"/><rect x="153" y="113" width="1" height="1" fill="#262660"/><rect x="145" y="112" width="1" height="1" fill="#202040"/><rect x="135" y="105" width="1" height="1" fill="#141438"/><rect x="109" y="127" width="1" height="1" fill="#18183e"/><rect x="158" y="126" width="1" height="1" fill="#141438"/><rect x="134" y="165" width="1" height="1" fill="#262660"/><rect x="114" y="107" width="1" height="1" fill="#341c1c"/><rect x="117" y="160" width="1" height="1" fill="#101030"/><rect x="150" y="101" width="1" height="1" fill="#2c2c50"/><rect x="163" y="126" width="1" height="1" fill="#1c1c48"/><rect x="162" y="146" width="1" height="1" fill="#1c3434"/><rect x="139" y="148" width="1" height="1" fill="#1c1c48"/><rect x="127" y="102" width="1" height="1" fill="#141438"/><rect x="103" y="117" width="1" height="1" fill="#18284e"/><rect x="128" y="132" width="1" height="1" fill="#341c1c"/><rect x="100" y="139" width="1" height="1" fill="#40402c"/><rect x="108" y="139" width="1" height="1" fill="#262660"/><rect x="139" y="154" width="1" height="1" fill="#101030"/><rect x="150" y="144" width="1" height="1" fill="#1c1c48"/><rect x="158" y="150" width="1" height="1" fill="#262660"/><rect x="141" y="152" width="1" height="1" fill="#202040"/><rect x="131" y="167" width="1" height="1" fill="#202040"/><rect x="131" y="160" width="1" height="1" fill="#202040"/><rect x="156" y="150" width="1" height="1" fill="#101030"/><rect x="143" y="96" width="1" height="1" fill="#1c1c48"/><rect x="99" y="120" width="1" height="1" fill="#18284e"/><rect x="120" y="127" width="1" height="1" fill="#1c1c48"/><rect x="141" y="142" width="1" height="1" fill="#18183e"/><rect x="109" y="111" width="1" height="1" fill="#141438"/><rect x="131" y="135" width="1" height="1" fill="#18183e"/><rect x="133" y="153" width="1" height="1" fill="#141438"/><rect x="110" y="151" width="1" height="1" fill="#341c1c"/><rect x="107" y="144" width="1" height="1" fill="#141438"/><rect x="130" y="121" width="1" height="1" fill="#141438"/><rect x="105" y="140" width="1" height="1" fill="#2c2c50"/><rect x="109" y="152" width="1" height="1" fill="#1c3434"/><rect x="141" y="100" width="1" height="1" fill="#141438"/><rect x="145" y="148" width="1" height="1" fill="#18183e"/><rect x="130" y="149" width="1" height="1" fill="#1c3434"/><rect x="127" y="129" width="1" height="1" fill="#18284e"/><rect x="128" y="113" width="1" height="1" fill="#18284e"/><rect x="126" y="112" width="1" height="1" fill="#341c1c"/><rect x="152" y="111" width="1" height="1" fill="#2c2c50"/><rect x="131" y="165" width="1" height="1" fill="#101030"/><rect x="119" y="131" width="1" height="1" fill="#141438"/><rect x="121" y="102" width="1" height="1" fill="#141438"/><rect x="146" y="123" width="1" height="1" fill="#101030"/><rect x="100" y="118" width="1" height="1" fill="#2c2c50"/><rect x="98" y="117" width="1" height="1" fill="#2c2c50"/><rect x="112" y="121" width="1" height="1" fill="#40402c"/><rect x="121" y="163" width="1" height="1" fill="#18284e"/><rect x="119" y="125" width="1" height="1" fill="#1c3434"/><rect x="142" y="101" width="1" height="1" fill="#1c3434"/><rect x="125" y="116" width="1" height="1" fill="#202040"/><rect x="168" y="136" width="1" height="1" fill="#101030"/><rect x="123" y="141" width="1" height="1" fill="#24341c"/><rect x="143" y="113" width="1" height="1" fill="#1c1c48"/><rect x="166" y="136" width="1" height="1" fill="#24341c"/><rect x="128" y="118" width="1" height="1" fill="#1c3434"/><rect x="109" y="152" width="1" height="1" fill="#18183e"/><rect x="110" y="145" width="1" height="1" fill="#1c3434"/><rect x="129" y="146" width="1" height="1" fill="#18284e"/><rect x="130" y="107" width="1" height="1" fill="#2c2c50"/><rect x="95" y="118" width="1" height="1" fill="#18284e"/><rect x="115" y="120" width="1" height="1" fill="#202040"/><rect x="136" y="165" width="1" height="1" fill="#101030"/><rect x="162" y="121" width="1" height="1" fill="#101030"/><rect x="133" y="121" width="1" height="1" fill="#2c2c50"/><rect x="152" y="131" width="1" height="1" fill="#34503c"/><rect x="131" y="143" width="1" height="1" fill="#341c1c"/><rect x="121" y="144" width="1" height="1" fill="#40402c"/><rect x="165" y="129" width="1" height="1" fill="#34503c"/><rect x="133" y="129" width="1" height="1" fill="#141438"/><rect x="101" y="133" width="1" height="1" fill="#18183e"/><rect x="170" y="142" width="1" height="1" fill="#262660"/><rect x="142" y="149" width="1" height="1" fill="#18284e"/><rect x="115" y="161" width="1" height="1" fill="#341c1c"/><rect x="128" y="109" width="1" height="1" fill="#341c1c"/><rect x="90" y="124" width="1" height="1" fill="#18183e"/><rect x="130" y="147" width="1" height="1" fill="#40402c"/><rect x="124" y="120" width="1" height="1" fill="#141438"/><rect x="124" y="147" width="1" height="1" fill="#341c1c"/><rect x="130" y="106" width="1" height="1" fill="#202040"/><rect x="130" y="105" width="1" height="1" fill="#341c1c"/><rect x="129" y="167" width="1" height="1" fill="#1c1c48"/><rect x="121" y="107" width="1" height="1" fill="#34503c"/><rect x="93" y="122" width="1" height="1" fill="#101030"/><rect x="116" y="104" width="1" height="1" fill="#262660"/><rect x="145" y="121" width="1" height="1" fill="#2c2c50"/><rect x="94" y="125" width="1" height="1" fill="#18284e"/><rect x="136" y="154" width="1" height="1" fill="#40402c"/><rect x="118" y="159" width="1" height="1" fill="#202040"/><rect x="128" y="121" width="1" height="1" fill="#141438"/><rect x="104" y="120" width="1" height="1" fill="#141438"/><rect x="90" y="124" width="1" height="1" fill="#202040"/><rect x="141" y="123" width="1" height="1" fill="#40402c"/><rect x="117" y="112" width="1" height="1" fill="#34503c"/><rect x="113" y="151" width="1" height="1" fill="#34503c"/><rect x="166" y="143" width="1" height="1" fill="#18284e"/><rect x="109" y="125" width="1" height="1" fill="#141438"/><rect x="99" y="131" width="1" height="1" fill="#1c1c48"/><rect x="140" y="117" width="1" height="1" fill="#2c2c50"/><rect x="127" y="156" width="1" height="1" fill="#34503c"/><rect x="152" y="110" width="1" height="1" fill="#18284e"/><rect x="143" y="130" width="1" height="1" fill="#262660"/><rect x="96" y="131" width="1" height="1" fill="#101030"/><rect x="99" y="128" width="1" height="1" fill="#18183e"/><rect x="108" y="135" width="1" height="1" fill="#202040"/><rect x="145" y="99" width="1" height="1" fill="#1c3434"/><rect x="113" y="137" width="1" height="1" fill="#2c2c50"/><rect x="109" y="111" width="1" height="1" fill="#141438"/><rect x="109" y="110" width="1" height="1" fill="#24341c"/><rect x="109" y="110" width="1" height="1" fill="#262660"/><rect x="96" y="129" width="1" height="1" fill="#341c1c"/><rect x="171" y="139" width="1" height="1" fill="#18284e"/><rect x="120" y="163" width="1" height="1" fill="#141438"/><rect x="139" y="155" width="1" height="1" fill="#18183e"/><rect x="139" y="142" width="1" height="1" fill="#341c1c"/><rect x="158" y="124" width="1" height="1" fill="#2c2c50"/><rect x="103" y="115" width="1" height="1" fill="#341c1c"/><rect x="129" y="124" width="1" height="1" fill="#202040"/><rect x="121" y="136" width="1" height="1" fill="#18183e"/><rect x="133" y="145" width="1" height="1" fill="#40402c"/><rect x="147" y="124" width="1" height="1" fill="#1c3434"/><rect x="145" y="124" width="1" height="1" fill="#1c1c48"/><rect x="114" y="137" width="1" height="1" fill="#2c2c50"/><rect x="143" y="122" width="1" height="1" fill="#40402c"/><rect x="158" y="123" width="1" height="1" fill="#2c2c50"/><rect x="127" y="102" width="1" height="1" fill="#1c1c48"/><rect x="157" y="123" width="1" height="1" fill="#34503c"/><rect x="141" y="120" width="1" height="1" fill="#262660"/><rect x="102" y="118" width="1" height="1" fill="#24341c"/><rect x="97" y="131" width="1" height="1" fill="#202040"/><rect x="113" y="161" width="1" height="1" fill="#1c1c48"/><rect x="121" y="166" width="1" height="1" fill="#34503c"/><rect x="141" y="141" width="1" height="1" fill="#341c1c"/><rect x="106" y="123" width="1" height="1" fill="#262660"/><rect x="101" y="119" width="1" height="1" fill="#24341c"/><rect x="109" y="151" width="1" height="1" fill="#341c1c"/><rect x="139" y="136" width="1" height="1" fill="#18183e"/><rect x="154" y="144" width="1" height="1" fill="#1c3434"/><rect x="138" y="125" width="1" height="1" fill="#18183e"/><rect x="119" y="132" width="1" height="1" fill="#24341c"/><rect x="130" y="109" width="1" height="1" fill="#202040"/><rect x="141" y="159" width="1" height="1" fill="#24341c"/><rect x="157" y="123" width="1" height="1" fill="#18284e"/><rect x="99" y="126" width="1" height="1" fill="#18284e"/><rect x="156" y="132" width="1" height="1" fill="#18183e"/><rect x="154" y="132" width="1" height="1" fill="#1c1c48"/><rect x="144" y="156" width="1" height="1" fill="#1c1c48"/><rect x="93" y="119" width="1" height="1" fill="#202040"/><rect x="109" y="116" width="1" height="1" fill="#34503c"/><rect x="100" y="132" width="1" height="1" fill="#141438"/><rect x="105" y="111" width="1" height="1" fill="#262660"/><rect x="108" y="121" width="1" height="1" fill="#341c1c"/><rect x="133" y="143" width="1" height="1" fill="#2c2c50"/><rect x="132" y="148" width="1" height="1" fill="#18284e"/><rect x="109" y="135" width="1" height="1" fill="#40402c"/><rect x="151" y="120" width="1" height="1" fill="#40402c"/><rect x="118" y="154" width="1" height="1" fill="#141438"/><rect x="107" y="141" width="1" height="1" fill="#1c1c48"/><rect x="113" y="133" width="1" height="1" fill="#1c3434"/><rect x="138" y="146" width="1" height="1" fill="#2c2c50"/><rect x="151" y="153" width="1" height="1" fill="#341c1c"/><rect x="125" y="133" width="1" height="1" fill="#1c1c48"/><rect x="144" y="90" width="1" height="1" fill="#1c1c48"/><rect x="136" y="115" width="1" height="1" fill="#262660"/><rect x="118" y="108" width="1" height="1" fill="#34503c"/><rect x="119" y="160" width="1" height="1" fill="#24341c"/><rect x="122" y="111" width="1" height="1" fill="#1c1c48"/><rect x="164" y="140" width="1" height="1" fill="#34503c"/><rect x="126" y="169" width="1" height="1" fill="#101030"/><rect x="130" y="103" width="1" height="1" fill="#1c1c48"/><rect x="122" y="109" width="1" height="1" fill="#1c1c48"/><rect x="140" y="145" width="1" height="1" fill="#341c1c"/><rect x="140" y="132" width="1" height="1" fill="#18183e"/><rect x="123" y="141" width="1" height="1" fill="#262660"/><rect x="114" y="114" width="1" height="1" fill="#1c1c48"/><rect x="129" y="135" width="1" height="1" fill="#40402c"/><rect x="128" y="152" width="1" height="1" fill="#141438"/><rect x="110" y="144" width="1" height="1" fill="#18284e"/><rect x="116" y="153" width="1" height="1" fill="#101030"/><rect x="146" y="147" width="1" height="1" fill="#262660"/><rect x="104" y="122" width="1" height="1" fill="#34503c"/><rect x="142" y="148" width="1" height="1" fill="#18183e"/><rect x="160" y="135" width="1" height="1" fill="#141438"/><rect x="160" y="148" width="1" height="1" fill="#1c1c48"/><rect x="125" y="151" width="1" height="1" fill="#34503c"/><rect x="121" y="139" width="1" height="1" fill="#34503c"/><rect x="142" y="148" width="1" height="1" fill="#101030"/><rect x="153" y="106" width="1" height="1" fill="#262660"/><rect x="157" y="143" width="1" height="1" fill="#202040"/><rect x="142" y="113" width="1" height="1" fill="#18284e"/><rect x="143" y="114" width="1" height="1" fill="#2c2c50"/><rect x="110" y="113" width="1" height="1" fill="#101030"/><rect x="154" y="140" width="1" height="1" fill="#141438"/><rect x="161" y="142" width="1" height="1" fill="#1c1c48"/><rect x="132" y="97" width="1" height="1" fill="#141438"/><rect x="148" y="135" width="1" height="1" fill="#341c1c"/><rect x="137" y="113" width="1" height="1" fill="#40402c"/><rect x="130" y="157" width="1" height="1" fill="#24341c"/><rect x="171" y="139" width="1" height="1" fill="#262660"/><rect x="112" y="107" width="1" height="1" fill="#101030"/><rect x="136" y="97" width="1" height="1" fill="#2c2c50"/><rect x="118" y="123" width="1" height="1" fill="#40402c"/><rect x="124" y="144" width="1" height="1" fill="#2c2c50"/><rect x="105" y="111" width="1" height="1" fill="#262660"/><rect x="131" y="121" width="1" height="1" fill="#18183e"/><rect x="108" y="128" width="1" height="1" fill="#262660"/><rect x="139" y="148" width="1" height="1" fill="#34503c"/><rect x="143" y="118" width="1" height="1" fill="#2c2c50"/><rect x="132" y="163" width="1" height="1" fill="#141438"/><rect x="144" y="152" width="1" height="1" fill="#24341c"/><rect x="127" y="148" width="1" height="1" fill="#1c3434"/><rect x="137" y="99" width="1" height="1" fill="#141438"/><rect x="143" y="148" width="1" height="1" fill="#262660"/><rect x="104" y="114" width="1" height="1" fill="#101030"/><rect x="159" y="142" width="1" height="1" fill="#101030"/><rect x="116" y="133" width="1" height="1" fill="#24341c"/><rect x="144" y="105" width="1" height="1" fill="#24341c"/><rect x="151" y="126" width="1" height="1" fill="#341c1c"/><rect x="161" y="126" width="1" height="1" fill="#341c1c"/><rect x="131" y="143" width="1" height="1" fill="#141438"/><rect x="148" y="139" width="1" height="1" fill="#18183e"/><rect x="124" y="108" width="1" height="1" fill="#101030"/><rect x="143" y="139" width="1" height="1" fill="#341c1c"/><rect x="146" y="144" width="1" height="1" fill="#141438"/><rect x="125" y="111" width="1" height="1" fill="#101030"/><rect x="96" y="125" width="1" height="1" fill="#202040"/><rect x="122" y="150" width="1" height="1" fill="#24341c"/><rect x="109" y="125" width="1" height="1" fill="#141438"/><rect x="132" y="145" width="1" height="1" fill="#24341c"/><rect x="105" y="118" width="1" height="1" fill="#34503c"/><rect x="127" y="106" width="1" height="1" fill="#141438"/><rect x="132" y="143" width="1" height="1" fill="#2c2c50"/><rect x="132" y="124" width="1" height="1" fill="#141438"/><rect x="106" y="147" width="1" height="1" fill="#40402c"/><rect x="150" y="141" width="1" height="1" fill="#18183e"/><rect x="123" y="125" width="1" height="1" fill="#101030"/><rect x="146" y="138" width="1" height="1" fill="#18284e"/><rect x="168" y="134" width="1" height="1" fill="#341c1c"/><rect x="127" y="103" width="1" height="1" fill="#202040"/><rect x="104" y="144" width="1" height="1" fill="#101030"/><rect x="118" y="143" width="1" height="1" fill="#202040"/><rect x="158" y="129" width="1" height="1" fill="#1c3434"/><rect x="153" y="144" width="1" height="1" fill="#202040"/><rect x="159" y="119" width="1" height="1" fill="#341c1c"/><rect x="110" y="121" width="1" height="1" fill="#1c3434"/><rect x="129" y="158" width="1" height="1" fill="#202040"/><rect x="112" y="110" width="1" height="1" fill="#1c3434"/><rect x="115" y="130" width="1" height="1" fill="#34503c"/><rect x="142" y="145" width="1" height="1" fill="#2c2c50"/><rect x="101" y="115" width="1" height="1" fill="#40402c"/><rect x="142" y="90" width="1" height="1" fill="#1c1c48"/><rect x="113" y="141" width="1" height="1" fill="#34503c"/><rect x="154" y="118" width="1" height="1" fill="#24341c"/><rect x="105" y="123" width="1" height="1" fill="#262660"/><rect x="140" y="156" width="1" height="1" fill="#18183e"/><rect x="165" y="136" width="1" height="1" fill="#18183e"/><rect x="147" y="134" width="1" height="1" fill="#101030"/><rect x="160" y="146" width="1" height="1" fill="#18284e"/><rect x="135" y="111" width="1" height="1" fill="#341c1c"/><rect x="159" y="129" width="1" height="1" fill="#262660"/><rect x="100" y="131" width="1" height="1" fill="#141438"/><rect x="102" y="140" width="1" height="1" fill="#101030"/><rect x="128" y="137" width="1" height="1" fill="#18183e"/><rect x="113" y="129" width="1" height="1" fill="#40402c"/><rect x="124" y="171" width="1" height="1" fill="#18284e"/><rect x="103" y="119" width="1" height="1" fill="#18183e"/><rect x="131" y="130" width="1" height="1" fill="#24341c"/><rect x="141" y="118" width="1" height="1" fill="#18183e"/><rect x="119" y="129" width="1" height="1" fill="#262660"/><rect x="112" y="118" width="1" height="1" fill="#1c3434"/><rect x="135" y="160" width="1" height="1" fill="#1c3434"/><rect x="118" y="131" width="1" height="1" fill="#2c2c50"/><rect x="131" y="112" width="1" height="1" fill="#262660"/><rect x="117" y="106" width="1" height="1" fill="#141438"/><rect x="156" y="117" width="1" height="1" fill="#2c2c50"/><rect x="149" y="99" width="1" height="1" fill="#18183e"/><rect x="122" y="136" width="1" height="1" fill="#40402c"/><rect x="140" y="145" width="1" height="1" fill="#202040"/><rect x="131" y="135" width="1" height="1" fill="#40402c"/><rect x="141" y="142" width="1" height="1" fill="#101030"/><rect x="142" y="142" width="1" height="1" fill="#24341c"/><rect x="166" y="145" width="1" height="1" fill="#2c2c50"/><rect x="114" y="150" width="1" height="1" fill="#1c3434"/><rect x="130" y="133" width="1" height="1" fill="#18284e"/><rect x="154" y="125" width="1" height="1" fill="#101030"/><rect x="89" y="122" width="1" height="1" fill="#34503c"/><rect x="135" y="96" width="1" height="1" fill="#141438"/><rect x="146" y="99" width="1" height="1" fill="#18284e"/><rect x="128" y="112" width="1" height="1" fill="#34503c"/><rect x="108" y="152" width="1" height="1" fill="#24341c"/><rect x="152" y="148" width="1" height="1" fill="#24341c"/><rect x="142" y="149" width="1" height="1" fill="#141438"/><rect x="141" y="122" width="1" height="1" fill="#1c3434"/><rect x="150" y="103" width="1" height="1" fill="#141438"/><rect x="140" y="116" width="1" height="1" fill="#34503c"/><rect x="150" y="129" width="1" height="1" fill="#24341c"/><rect x="119" y="144" width="1" height="1" fill="#18183e"/><rect x="156" y="130" width="1" height="1" fill="#202040"/><rect x="155" y="137" width="1" height="1" fill="#1c3434"/><rect x="112" y="142" width="1" height="1" fill="#18183e"/><rect x="116" y="141" width="1" height="1" fill="#1c1c48"/><rect x="159" y="140" width="1" height="1" fill="#1c3434"/><rect x="109" y="122" width="1" height="1" fill="#40402c"/><rect x="157" y="113" width="1" height="1" fill="#1c1c48"/><rect x="115" y="112" width="1" height="1" fill="#24341c"/><rect x="138" y="159" width="1" height="1" fill="#202040"/><rect x="137" y="112" width="1" height="1" fill="#202040"/><rect x="157" y="147" width="1" height="1" fill="#141438"/><rect x="135" y="157" width="1" height="1" fill="#341c1c"/><rect x="155" y="151" width="1" height="1" fill="#341c1c"/><rect x="122" y="149" width="1" height="1" fill="#1c3434"/><rect x="121" y="135" width="1" height="1" fill="#262660"/><rect x="108" y="138" width="1" height="1" fill="#1c3434"/><rect x="164" y="133" width="1" height="1" fill="#141438"/><rect x="131" y="106" width="1" height="1" fill="#341c1c"/><rect x="148" y="120" width="1" height="1" fill="#34503c"/><rect x="118" y="156" width="1" height="1" fill="#24341c"/><rect x="130" y="163" width="1" height="1" fill="#2c2c50"/><rect x="142" y="156" width="1" height="1" fill="#24341c"/><rect x="112" y="141" width="1" height="1" fill="#18284e"/><rect x="162" y="130" width="1" height="1" fill="#34503c"/><rect x="126" y="140" width="1" height="1" fill="#34503c"/><rect x="162" y="128" width="1" height="1" fill="#18284e"/><rect x="162" y="144" width="1" height="1" fill="#18284e"/><rect x="115" y="109" width="1" height="1" fill="#18284e"/><rect x="121" y="127" width="1" height="1" fill="#24341c"/><rect x="119" y="109" width="1" height="1" fill="#101030"/><rect x="110" y="119" width="1" height="1" fill="#262660"/><rect x="193" y="105" width="1" height="1" fill="#141438"/><rect x="186" y="113" width="1" height="1" fill="#18284e"/><rect x="179" y="86" width="1" height="1" fill="#40402c"/><rect x="161" y="76" width="1" height="1" fill="#24341c"/><rect x="188" y="86" width="1" height="1" fill="#101030"/><rect x="201" y="104" width="1" height="1" fill="#141438"/><rect x="165" y="68" width="1" height="1" fill="#2c2c50"/><rect x="159" y="75" width="1" height="1" fill="#1c1c48"/><rect x="161" y="92" width="1" height="1" fill="#24341c"/><rect x="177" y="70" width="1" height="1" fill="#40402c"/><rect x="175" y="71" width="1" height="1" fill="#1c3434"/><rect x="185" y="81" width="1" height="1" fill="#202040"/><rect x="179" y="80" width="1" height="1" fill="#1c3434"/><rect x="176" y="78" width="1" height="1" fill="#341c1c"/><rect x="171" y="69" width="1" height="1" fill="#1c1c48"/><rect x="168" y="85" width="1" height="1" fill="#1c1c48"/><rect x="187" y="95" width="1" height="1" fill="#1c3434"/><rect x="161" y="69" width="1" height="1" fill="#18183e"/><rect x="193" y="117" width="1" height="1" fill="#34503c"/><rect x="192" y="96" width="1" height="1" fill="#101030"/><rect x="171" y="80" width="1" height="1" fill="#18183e"/><rect x="179" y="121" width="1" height="1" fill="#1c3434"/><rect x="165" y="99" width="1" height="1" fill="#2c2c50"/><rect x="185" y="120" width="1" height="1" fill="#2c2c50"/><rect x="182" y="91" width="1" height="1" fill="#262660"/><rect x="205" y="115" width="1" height="1" fill="#40402c"/><rect x="185" y="123" width="1" height="1" fill="#1c3434"/><rect x="180" y="96" width="1" height="1" fill="#262660"/><rect x="169" y="99" width="1" height="1" fill="#1c1c48"/><rect x="201" y="105" width="1" height="1" fill="#141438"/><rect x="182" y="109" width="1" height="1" fill="#18284e"/><rect x="172" y="66" width="1" height="1" fill="#24341c"/><rect x="180" y="95" width="1" height="1" fill="#1c3434"/><rect x="164" y="76" width="1" height="1" fill="#18183e"/><rect x="185" y="113" width="1" height="1" fill="#24341c"/><rect x="189" y="109" width="1" height="1" fill="#34503c"/><rect x="165" y="83" width="1" height="1" fill="#40402c"/><rect x="175" y="99" width="1" height="1" fill="#2c2c50"/><rect x="176" y="104" width="1" height="1" fill="#2c2c50"/><rect x="157" y="73" width="1" height="1" fill="#2c2c50"/><rect x="176" y="95" width="1" height="1" fill="#1c1c48"/><rect x="164" y="89" width="1" height="1" fill="#40402c"/><rect x="188" y="117" width="1" height="1" fill="#1c1c48"/><rect x="167" y="98" width="1" height="1" fill="#1c1c48"/><rect x="182" y="90" width="1" height="1" fill="#1c1c48"/><rect x="168" y="81" width="1" height="1" fill="#18183e"/><rect x="186" y="126" width="1" height="1" fill="#141438"/><rect x="168" y="88" width="1" height="1" fill="#1c3434"/><rect x="178" y="109" width="1" height="1" fill="#341c1c"/><rect x="193" y="92" width="1" height="1" fill="#262660"/><rect x="169" y="93" width="1" height="1" fill="#1c3434"/><rect x="170" y="79" width="1" height="1" fill="#341c1c"/><rect x="177" y="112" width="1" height="1" fill="#18284e"/><rect x="191" y="126" width="1" height="1" fill="#40402c"/><rect x="171" y="85" width="1" height="1" fill="#18183e"/><rect x="188" y="109" width="1" height="1" fill="#40402c"/><rect x="196" y="101" width="1" height="1" fill="#141438"/><rect x="172" y="85" width="1" height="1" fill="#262660"/><rect x="184" y="87" width="1" height="1" fill="#2c2c50"/><rect x="169" y="98" width="1" height="1" fill="#202040"/><rect x="201" y="119" width="1" height="1" fill="#2c2c50"/><rect x="163" y="90" width="1" height="1" fill="#1c1c48"/><rect x="152" y="78" width="1" height="1" fill="#141438"/><rect x="168" y="98" width="1" height="1" fill="#1c3434"/><rect x="182" y="96" width="1" height="1" fill="#18183e"/><rect x="176" y="92" width="1" height="1" fill="#1c1c48"/><rect x="186" y="84" width="1" height="1" fill="#1c1c48"/><rect x="191" y="97" width="1" height="1" fill="#18284e"/><rect x="175" y="95" width="1" height="1" fill="#18183e"/><rect x="184" y="100" width="1" height="1" fill="#341c1c"/><rect x="177" y="104" width="1" height="1" fill="#34503c"/><rect x="171" y="97" width="1" height="1" fill="#18284e"/><rect x="161" y="82" width="1" height="1" fill="#18284e"/><rect x="192" y="118" width="1" height="1" fill="#262660"/><rect x="160" y="80" width="1" height="1" fill="#262660"/><rect x="175" y="64" width="1" height="1" fill="#34503c"/><rect x="187" y="85" width="1" height="1" fill="#18183e"/><rect x="175" y="115" width="1" height="1" fill="#1c3434"/><rect x="193" y="99" width="1" height="1" fill="#1c3434"/><rect x="174" y="66" width="1" height="1" fill="#1c1c48"/><rect x="180" y="99" width="1" height="1" fill="#1c3434"/><rect x="181" y="70" width="1" height="1" fill="#341c1c"/><rect x="175" y="68" width="1" height="1" fill="#24341c"/><rect x="182" y="96" width="1" height="1" fill="#1c1c48"/><rect x="182" y="118" width="1" height="1" fill="#34503c"/><rect x="176" y="116" width="1" height="1" fill="#18183e"/><rect x="172" y="72" width="1" height="1" fill="#1c3434"/><rect x="188" y="121" width="1" height="1" fill="#34503c"/><rect x="154" y="73" width="1" height="1" fill="#34503c"/><rect x="174" y="63" width="1" height="1" fill="#40402c"/><rect x="185" y="128" width="1" height="1" fill="#141438"/><rect x="154" y="76" width="1" height="1" fill="#341c1c"/><rect x="204" y="117" width="1" height="1" fill="#1c3434"/><rect x="176" y="77" width="1" height="1" fill="#141438"/><rect x="191" y="107" width="1" height="1" fill="#34503c"/><rect x="164" y="81" width="1" height="1" fill="#101030"/><rect x="180" y="116" width="1" height="1" fill="#341c1c"/><rect x="172" y="83" width="1" height="1" fill="#40402c"/><rect x="171" y="106" width="1" height="1" fill="#18284e"/><rect x="184" y="87" width="1" height="1" fill="#141438"/><rect x="168" y="76" width="1" height="1" fill="#1c1c48"/><rect x="158" y="73" width="1" height="1" fill="#262660"/><rect x="181" y="76" width="1" height="1" fill="#141438"/><rect x="191" y="126" width="1" height="1" fill="#1c3434"/><rect x="186" y="91" width="1" height="1" fill="#2c2c50"/><rect x="183" y="88" width="1" height="1" fill="#262660"/><rect x="183" y="79" width="1" height="1" fill="#202040"/><rect x="192" y="115" width="1" height="1" fill="#341c1c"/><rect x="170" y="107" width="1" height="1" fill="#18284e"/><rect x="199" y="113" width="1" height="1" fill="#341c1c"/><rect x="154" y="82" width="1" height="1" fill="#341c1c"/><rect x="174" y="85" width="1" height="1" fill="#141438"/><rect x="197" y="122" width="1" height="1" fill="#24341c"/><rect x="192" y="123" width="1" height="1" fill="#1c1c48"/><rect x="190" y="109" width="1" height="1" fill="#341c1c"/><rect x="168" y="79" width="1" height="1" fill="#34503c"/><rect x="195" y="110" width="1" height="1" fill="#1c1c48"/><rect x="175" y="103" width="1" height="1" fill="#40402c"/><rect x="162" y="81" width="1" height="1" fill="#40402c"/><rect x="195" y="99" width="1" height="1" fill="#18183e"/><rect x="177" y="108" width="1" height="1" fill="#2c2c50"/><rect x="196" y="106" width="1" height="1" fill="#1c1c48"/><rect x="176" y="112" width="1" height="1" fill="#101030"/><rect x="182" y="84" width="1" height="1" fill="#40402c"/><rect x="177" y="84" width="1" height="1" fill="#262660"/><rect x="195" y="118" width="1" height="1" fill="#18183e"/><rect x="188" y="96" width="1" height="1" fill="#18183e"/><rect x="192" y="90" width="1" height="1" fill="#262660"/><rect x="201" y="115" width="1" height="1" fill="#141438"/><rect x="193" y="117" width="1" height="1" fill="#1c3434"/><rect x="161" y="71" width="1" height="1" fill="#202040"/><rect x="189" y="98" width="1" height="1" fill="#341c1c"/><rect x="171" y="66" width="1" height="1" fill="#18183e"/><rect x="169" y="69" width="1" height="1" fill="#101030"/><rect x="180" y="94" width="1" height="1" fill="#101030"/><rect x="165" y="96" width="1" height="1" fill="#141438"/><rect x="193" y="101" width="1" height="1" fill="#341c1c"/><rect x="183" y="113" width="1" height="1" fill="#24341c"/><rect x="175" y="74" width="1" height="1" fill="#101030"/><rect x="168" y="85" width="1" height="1" fill="#341c1c"/><rect x="169" y="67" width="1" height="1" fill="#1c3434"/><rect x="177" y="68" width="1" height="1" fill="#2c2c50"/><rect x="177" y="100" width="1" height="1" fill="#1c3434"/><rect x="180" y="90" width="1" height="1" fill="#341c1c"/><rect x="172" y="66" width="1" height="1" fill="#1c3434"/><rect x="188" y="126" width="1" height="1" fill="#18183e"/><rect x="192" y="106" width="1" height="1" fill="#18284e"/><rect x="197" y="119" width="1" height="1" fill="#1c3434"/><rect x="182" y="123" width="1" height="1" fill="#18183e"/><rect x="200" y="112" width="1" height="1" fill="#2c2c50"/><rect x="173" y="105" width="1" height="1" fill="#2c2c50"/><rect x="170" y="86" width="1" height="1" fill="#262660"/><rect x="175" y="63" width="1" height="1" fill="#341c1c"/><rect x="180" y="95" width="1" height="1" fill="#24341c"/><rect x="164" y="69" width="1" height="1" fill="#18183e"/><rect x="202" y="115" width="1" height="1" fill="#40402c"/><rect x="199" y="107" width="1" height="1" fill="#34503c"/><rect x="170" y="92" width="1" height="1" fill="#262660"/><rect x="188" y="117" width="1" height="1" fill="#1c1c48"/><rect x="190" y="100" width="1" height="1" fill="#40402c"/><rect x="191" y="91" width="1" height="1" fill="#18284e"/><rect x="184" y="126" width="1" height="1" fill="#2c2c50"/><rect x="182" y="100" width="1" height="1" fill="#40402c"/><rect x="166" y="76" width="1" height="1" fill="#341c1c"/><rect x="166" y="94" width="1" height="1" fill="#262660"/><rect x="178" y="98" width="1" height="1" fill="#101030"/><rect x="175" y="65" width="1" height="1" fill="#141438"/><rect x="181" y="119" width="1" height="1" fill="#18284e"/><rect x="188" y="128" width="1" height="1" fill="#262660"/><rect x="174" y="72" width="1" height="1" fill="#341c1c"/><rect x="184" y="115" width="1" height="1" fill="#24341c"/><rect x="173" y="103" width="1" height="1" fill="#40402c"/><rect x="165" y="86" width="1" height="1" fill="#1c1c48"/><rect x="178" y="68" width="1" height="1" fill="#24341c"/><rect x="188" y="121" width="1" height="1" fill="#34503c"/><rect x="172" y="86" width="1" height="1" fill="#2c2c50"/><rect x="199" y="112" width="1" height="1" fill="#1c1c48"/><rect x="207" y="111" width="1" height="1" fill="#1c1c48"/><rect x="172" y="83" width="1" height="1" fill="#34503c"/><rect x="162" y="91" width="1" height="1" fill="#34503c"/><rect x="177" y="116" width="1" height="1" fill="#141438"/><rect x="173" y="70" width="1" height="1" fill="#1c3434"/><rect x="183" y="108" width="1" height="1" fill="#202040"/><rect x="167" y="91" width="1" height="1" fill="#1c1c48"/><rect x="171" y="70" width="1" height="1" fill="#262660"/><rect x="188" y="105" width="1" height="1" fill="#34503c"/><rect x="174" y="93" width="1" height="1" fill="#24341c"/><rect x="192" y="91" width="1" height="1" fill="#341c1c"/><rect x="161" y="85" width="1" height="1" fill="#141438"/><rect x="170" y="93" width="1" height="1" fill="#2c2c50"/><rect x="169" y="83" width="1" height="1" fill="#141438"/><rect x="167" y="95" width="1" height="1" fill="#1c3434"/><rect x="172" y="100" width="1" height="1" fill="#34503c"/><rect x="197" y="121" width="1" height="1" fill="#202040"/><rect x="176" y="100" width="1" height="1" fill="#18284e"/><rect x="172" y="79" width="1" height="1" fill="#202040"/><rect x="193" y="107" width="1" height="1" fill="#202040"/><rect x="179" y="86" width="1" height="1" fill="#341c1c"/><rect x="160" y="74" width="1" height="1" fill="#18183e"/><rect x="178" y="91" width="1" height="1" fill="#34503c"/><rect x="185" y="106" width="1" height="1" fill="#2c2c50"/><rect x="155" y="73" width="1" height="1" fill="#18284e"/><rect x="186" y="81" width="1" height="1" fill="#2c2c50"/><rect x="167" y="78" width="1" height="1" fill="#1c1c48"/><rect x="196" y="104" width="1" height="1" fill="#341c1c"/><rect x="174" y="74" width="1" height="1" fill="#34503c"/><rect x="167" y="95" width="1" height="1" fill="#18284e"/><rect x="159" y="73" width="1" height="1" fill="#262660"/><rect x="187" y="116" width="1" height="1" fill="#24341c"/><rect x="171" y="95" width="1" height="1" fill="#34503c"/><rect x="170" y="106" width="1" height="1" fill="#2c2c50"/><rect x="176" y="98" width="1" height="1" fill="#34503c"/><rect x="190" y="99" width="1" height="1" fill="#101030"/><rect x="178" y="79" width="1" height="1" fill="#262660"/><rect x="182" y="79" width="1" height="1" fill="#1c3434"/><rect x="190" y="114" width="1" height="1" fill="#2c2c50"/><rect x="195" y="124" width="1" height="1" fill="#101030"/><rect x="202" y="115" width="1" height="1" fill="#262660"/><rect x="180" y="105" width="1" height="1" fill="#2c2c50"/><rect x="205" y="107" width="1" height="1" fill="#2c2c50"/><rect x="164" y="77" width="1" height="1" fill="#1c3434"/><rect x="172" y="83" width="1" height="1" fill="#40402c"/><rect x="170" y="94" width="1" height="1" fill="#341c1c"/><rect x="186" y="92" width="1" height="1" fill="#34503c"/><rect x="202" y="112" width="1" height="1" fill="#1c1c48"/><rect x="197" y="121" width="1" height="1" fill="#24341c"/><rect x="177" y="69" width="1" height="1" fill="#1c3434"/><rect x="192" y="117" width="1" height="1" fill="#24341c"/><rect x="156" y="84" width="1" height="1" fill="#18183e"/><rect x="193" y="122" width="1" height="1" fill="#1c1c48"/><rect x="185" y="109" width="1" height="1" fill="#101030"/><rect x="172" y="95" width="1" height="1" fill="#18284e"/><rect x="171" y="75" width="1" height="1" fill="#341c1c"/><rect x="161" y="78" width="1" height="1" fill="#18284e"/><rect x="178" y="80" width="1" height="1" fill="#2c2c50"/><rect x="203" y="110" width="1" height="1" fill="#40402c"/><rect x="176" y="98" width="1" height="1" fill="#40402c"/><rect x="174" y="89" width="1" height="1" fill="#24341c"/><rect x="165" y="95" width="1" height="1" fill="#1c3434"/><rect x="192" y="111" width="1" height="1" fill="#341c1c"/><rect x="143" y="99" width="1.5" height="1.5" fill="#a0c0a0" opacity="0.7"/><rect x="123" y="144" width="1.5" height="1.5" fill="#80c0c0" opacity="0.7"/><rect x="146" y="145" width="1.5" height="1.5" fill="#c0c0a0" opacity="0.7"/><rect x="138" y="161" width="1.5" height="1.5" fill="#6080d0" opacity="0.7"/><rect x="169" y="81" width="1.5" height="1.5" fill="#a0b0a0" opacity="0.7"/><rect x="119" y="119" width="1.5" height="1.5" fill="#8080ff" opacity="0.7"/><rect x="100" y="129" width="1.5" height="1.5" fill="#70a070" opacity="0.7"/><rect x="180" y="93" width="1.5" height="1.5" fill="#90a0c0" opacity="0.7"/></svg>
<span class="t" style="left:533px;top:451px;font-size:9.7px;font-weight:bold;color:#2a2a2a;">Width:</span>
<span class="t" style="left:571px;top:451px;font-size:10px;font-weight:normal;color:#3a3a3a;letter-spacing:0.3px">4033.7408 arcsec</span>
<span class="t" style="left:667px;top:451px;font-size:9.7px;font-weight:bold;color:#2a2a2a;">Height:</span>
<span class="t" style="left:707px;top:451px;font-size:10px;font-weight:normal;color:#3a3a3a;letter-spacing:0.3px">4033.7408 arcsec</span>
</body></html>
